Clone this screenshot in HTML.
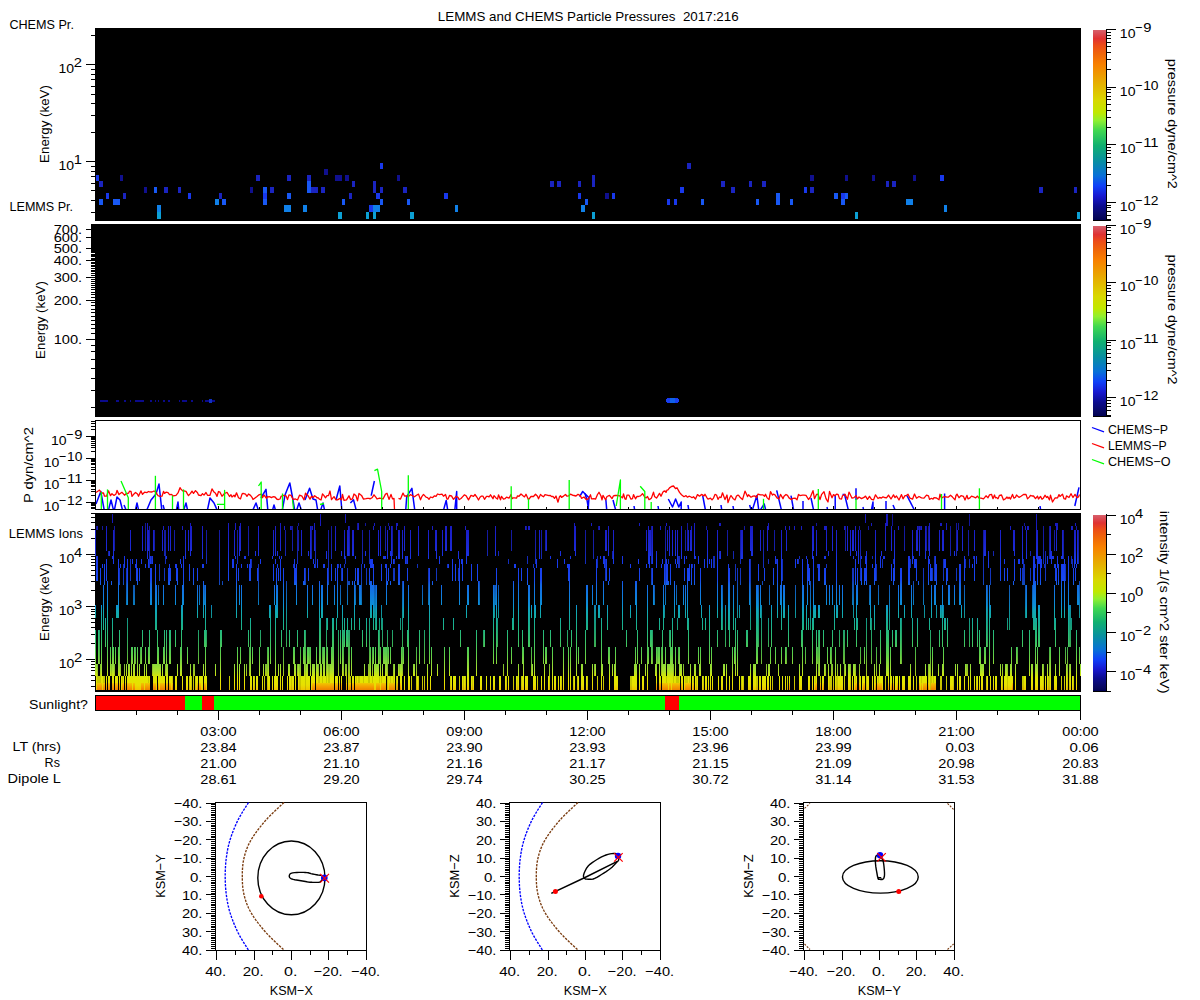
<!DOCTYPE html>
<html><head><meta charset="utf-8"><style>
html,body{margin:0;padding:0;background:#fff;width:1200px;height:1000px;overflow:hidden}
svg{display:block}
text{font-family:"Liberation Sans",sans-serif;fill:#000}
</style></head><body>
<svg width="1200" height="1000" viewBox="0 0 1200 1000" shape-rendering="crispEdges">
<defs><linearGradient id="cmap" x1="0" y1="1" x2="0" y2="0"><stop offset="0.0" stop-color="#000050"/><stop offset="0.026" stop-color="#080860"/><stop offset="0.079" stop-color="#0c0c90"/><stop offset="0.13" stop-color="#1818d0"/><stop offset="0.184" stop-color="#1040f8"/><stop offset="0.237" stop-color="#0870d8"/><stop offset="0.316" stop-color="#0890a0"/><stop offset="0.395" stop-color="#10b070"/><stop offset="0.474" stop-color="#40d850"/><stop offset="0.526" stop-color="#90f030"/><stop offset="0.568" stop-color="#c0e800"/><stop offset="0.632" stop-color="#d8d800"/><stop offset="0.737" stop-color="#e8a800"/><stop offset="0.82" stop-color="#f88000"/><stop offset="0.87" stop-color="#f06808"/><stop offset="0.92" stop-color="#ec4c18"/><stop offset="0.955" stop-color="#e03232"/><stop offset="0.985" stop-color="#d8505a"/><stop offset="1.0" stop-color="#d8606a"/></linearGradient><linearGradient id="iong" gradientUnits="userSpaceOnUse" x1="0" y1="513" x2="0" y2="691"><stop offset="0.0000" stop-color="#1414b0"/><stop offset="0.0955" stop-color="#1a1ec8"/><stop offset="0.2079" stop-color="#1c2ad8"/><stop offset="0.2640" stop-color="#1838ec"/><stop offset="0.3764" stop-color="#1848f0"/><stop offset="0.4045" stop-color="#1468e8"/><stop offset="0.5169" stop-color="#0c90d8"/><stop offset="0.5506" stop-color="#10a8b8"/><stop offset="0.6236" stop-color="#18b090"/><stop offset="0.7022" stop-color="#30c070"/><stop offset="0.7978" stop-color="#60d048"/><stop offset="0.8820" stop-color="#a8e030"/><stop offset="0.9270" stop-color="#e0e800"/><stop offset="0.9663" stop-color="#e8e000"/><stop offset="0.9944" stop-color="#f0c400"/></linearGradient><linearGradient id="ionh" gradientUnits="userSpaceOnUse" x1="0" y1="683" x2="0" y2="690"><stop offset="0" stop-color="#f0c800"/><stop offset="0.5" stop-color="#f4a000"/><stop offset="1" stop-color="#f08000"/></linearGradient><linearGradient id="iongd" gradientUnits="userSpaceOnUse" x1="0" y1="513" x2="0" y2="691"><stop offset="0.0000" stop-color="#10108c"/><stop offset="0.0955" stop-color="#1418a0"/><stop offset="0.2079" stop-color="#1621ac"/><stop offset="0.2640" stop-color="#132cbc"/><stop offset="0.3764" stop-color="#1339c0"/><stop offset="0.4045" stop-color="#1053b9"/><stop offset="0.5169" stop-color="#0a7ebe"/><stop offset="0.5506" stop-color="#0e93a1"/><stop offset="0.6236" stop-color="#159a7e"/><stop offset="0.7022" stop-color="#2aa862"/><stop offset="0.7978" stop-color="#54b73f"/><stop offset="0.8820" stop-color="#93c52a"/><stop offset="0.9270" stop-color="#c5cc00"/><stop offset="0.9663" stop-color="#ccc500"/><stop offset="0.9944" stop-color="#d3ac00"/></linearGradient></defs>
<rect width="1200" height="1000" fill="#fff"/>
<text x="437.85" y="20.5" font-size="13.5" textLength="300.8" lengthAdjust="spacingAndGlyphs" xml:space="preserve">LEMMS and CHEMS Particle Pressures  2017:216</text><rect x="95" y="28" width="986" height="193" fill="#000"/><rect x="96" y="175" width="3" height="6" fill="#1838ec"/><rect x="99" y="181" width="4" height="6" fill="#1a24c0"/><rect x="120" y="175" width="3" height="6" fill="#10108e"/><rect x="106" y="193" width="3" height="6" fill="#1838ec"/><rect x="99" y="199" width="4" height="6" fill="#1858f4"/><rect x="113" y="199" width="7" height="6" fill="#1858f4"/><rect x="123" y="193" width="3" height="6" fill="#1a24c0"/><rect x="144" y="187" width="3" height="6" fill="#10108e"/><rect x="154" y="187" width="3" height="6" fill="#1858f4"/><rect x="164" y="187" width="4" height="6" fill="#1a24c0"/><rect x="178" y="187" width="3" height="6" fill="#1a24c0"/><rect x="188" y="193" width="3" height="6" fill="#1838ec"/><rect x="157" y="205" width="4" height="7" fill="#1080e8"/><rect x="157" y="212" width="4" height="7" fill="#0ca0d4"/><rect x="215" y="199" width="4" height="6" fill="#1080e8"/><rect x="219" y="193" width="3" height="6" fill="#1a24c0"/><rect x="222" y="199" width="4" height="6" fill="#1858f4"/><rect x="250" y="187" width="3" height="6" fill="#10108e"/><rect x="256" y="175" width="4" height="6" fill="#1a24c0"/><rect x="263" y="187" width="4" height="6" fill="#1858f4"/><rect x="263" y="193" width="4" height="6" fill="#1838ec"/><rect x="263" y="199" width="4" height="6" fill="#1858f4"/><rect x="270" y="187" width="4" height="6" fill="#1a24c0"/><rect x="287" y="175" width="4" height="6" fill="#1a24c0"/><rect x="287" y="193" width="4" height="6" fill="#1858f4"/><rect x="284" y="205" width="7" height="7" fill="#1080e8"/><rect x="307" y="175" width="4" height="6" fill="#1a24c0"/><rect x="307" y="181" width="4" height="6" fill="#1858f4"/><rect x="307" y="187" width="4" height="6" fill="#1858f4"/><rect x="311" y="187" width="7" height="6" fill="#1a24c0"/><rect x="321" y="187" width="4" height="6" fill="#1a24c0"/><rect x="324" y="169" width="4" height="6" fill="#10108e"/><rect x="335" y="175" width="7" height="6" fill="#10108e"/><rect x="303" y="205" width="4" height="7" fill="#1080e8"/><rect x="342" y="199" width="3" height="6" fill="#1858f4"/><rect x="338" y="212" width="4" height="7" fill="#0ca0d4"/><rect x="345" y="175" width="4" height="6" fill="#10108e"/><rect x="352" y="181" width="3" height="6" fill="#1a24c0"/><rect x="349" y="193" width="3" height="6" fill="#1a24c0"/><rect x="373" y="181" width="3" height="6" fill="#1a24c0"/><rect x="373" y="187" width="3" height="6" fill="#1a24c0"/><rect x="380" y="163" width="3" height="6" fill="#1838ec"/><rect x="380" y="187" width="3" height="6" fill="#1a24c0"/><rect x="376" y="193" width="4" height="6" fill="#1838ec"/><rect x="380" y="199" width="3" height="6" fill="#1858f4"/><rect x="369" y="205" width="4" height="7" fill="#1838ec"/><rect x="373" y="205" width="7" height="7" fill="#1080e8"/><rect x="366" y="212" width="3" height="7" fill="#0ca0d4"/><rect x="373" y="212" width="3" height="7" fill="#0ca0d4"/><rect x="397" y="175" width="3" height="6" fill="#10108e"/><rect x="403" y="187" width="4" height="6" fill="#1a24c0"/><rect x="407" y="199" width="3" height="6" fill="#1858f4"/><rect x="410" y="212" width="4" height="7" fill="#0ca0d4"/><rect x="444" y="193" width="4" height="6" fill="#1838ec"/><rect x="455" y="205" width="3" height="7" fill="#1080e8"/><rect x="550" y="181" width="4" height="6" fill="#1a24c0"/><rect x="557" y="181" width="4" height="6" fill="#1a24c0"/><rect x="578" y="181" width="3" height="6" fill="#1a24c0"/><rect x="578" y="193" width="3" height="6" fill="#1838ec"/><rect x="585" y="199" width="3" height="6" fill="#1858f4"/><rect x="581" y="205" width="4" height="7" fill="#1080e8"/><rect x="592" y="175" width="3" height="6" fill="#1a24c0"/><rect x="592" y="181" width="3" height="6" fill="#1a24c0"/><rect x="592" y="212" width="3" height="7" fill="#0ca0d4"/><rect x="605" y="193" width="4" height="6" fill="#10108e"/><rect x="612" y="193" width="3" height="6" fill="#1838ec"/><rect x="667" y="199" width="3" height="6" fill="#1838ec"/><rect x="674" y="199" width="3" height="6" fill="#1838ec"/><rect x="680" y="187" width="4" height="6" fill="#1838ec"/><rect x="687" y="163" width="4" height="6" fill="#1a24c0"/><rect x="701" y="199" width="3" height="6" fill="#1858f4"/><rect x="721" y="181" width="4" height="6" fill="#1a24c0"/><rect x="731" y="187" width="4" height="6" fill="#1a24c0"/><rect x="749" y="181" width="3" height="6" fill="#1a24c0"/><rect x="762" y="181" width="4" height="6" fill="#1a24c0"/><rect x="756" y="199" width="3" height="6" fill="#1858f4"/><rect x="776" y="193" width="4" height="6" fill="#1858f4"/><rect x="776" y="199" width="4" height="6" fill="#1858f4"/><rect x="790" y="199" width="3" height="6" fill="#1858f4"/><rect x="804" y="187" width="3" height="6" fill="#1838ec"/><rect x="810" y="175" width="4" height="6" fill="#10108e"/><rect x="810" y="187" width="4" height="6" fill="#1a24c0"/><rect x="834" y="193" width="4" height="6" fill="#1858f4"/><rect x="841" y="193" width="4" height="6" fill="#1838ec"/><rect x="841" y="199" width="4" height="6" fill="#1858f4"/><rect x="845" y="193" width="3" height="6" fill="#1858f4"/><rect x="845" y="175" width="3" height="6" fill="#10108e"/><rect x="872" y="175" width="3" height="6" fill="#10108e"/><rect x="886" y="181" width="3" height="6" fill="#1a24c0"/><rect x="892" y="181" width="4" height="6" fill="#1a24c0"/><rect x="913" y="175" width="3" height="6" fill="#10108e"/><rect x="940" y="175" width="4" height="6" fill="#1838ec"/><rect x="906" y="199" width="7" height="6" fill="#1080e8"/><rect x="944" y="205" width="3" height="7" fill="#1080e8"/><rect x="855" y="212" width="3" height="7" fill="#0ca0d4"/><rect x="1039" y="187" width="4" height="6" fill="#1a24c0"/><rect x="1074" y="187" width="3" height="6" fill="#1a24c0"/><rect x="1077" y="212" width="3" height="7" fill="#0ca0d4"/><rect x="91" y="212" width="4" height="1" fill="#000"/><rect x="91" y="200" width="4" height="1" fill="#000"/><rect x="91" y="190" width="4" height="1" fill="#000"/><rect x="91" y="183" width="4" height="1" fill="#000"/><rect x="91" y="176" width="4" height="1" fill="#000"/><rect x="91" y="171" width="4" height="1" fill="#000"/><rect x="91" y="166" width="4" height="1" fill="#000"/><rect x="86" y="161" width="9" height="1" fill="#000"/><rect x="91" y="132" width="4" height="1" fill="#000"/><rect x="91" y="115" width="4" height="1" fill="#000"/><rect x="91" y="103" width="4" height="1" fill="#000"/><rect x="91" y="94" width="4" height="1" fill="#000"/><rect x="91" y="86" width="4" height="1" fill="#000"/><rect x="91" y="79" width="4" height="1" fill="#000"/><rect x="91" y="74" width="4" height="1" fill="#000"/><rect x="91" y="69" width="4" height="1" fill="#000"/><rect x="86" y="64" width="9" height="1" fill="#000"/><rect x="91" y="35" width="4" height="1" fill="#000"/><text x="9.4" y="29" font-size="13.5" textLength="64.5" lengthAdjust="spacingAndGlyphs" xml:space="preserve">CHEMS Pr.</text><text x="9.5" y="211.2" font-size="13.5" textLength="63.6" lengthAdjust="spacingAndGlyphs" xml:space="preserve">LEMMS Pr.</text><text x="58.4" y="73.25" font-size="13.5" textLength="15.6" lengthAdjust="spacingAndGlyphs" xml:space="preserve">10</text><text x="73.7" y="67.35" font-size="13.5" textLength="8.2" lengthAdjust="spacingAndGlyphs" xml:space="preserve">2</text><text x="58.4" y="170.1" font-size="13.5" textLength="15.6" lengthAdjust="spacingAndGlyphs" xml:space="preserve">10</text><text x="73.7" y="164.2" font-size="13.5" textLength="8.2" lengthAdjust="spacingAndGlyphs" xml:space="preserve">1</text><text transform="translate(49.2,162.9) rotate(-90)" x="0" y="0" font-size="13.5" textLength="77.8" lengthAdjust="spacingAndGlyphs" xml:space="preserve">Energy (keV)</text><rect x="95" y="224" width="986" height="193" fill="#000"/><rect x="100" y="400" width="8" height="2" fill="#0a0a8c"/><rect x="116" y="400" width="3" height="2" fill="#0a0a8c"/><rect x="124" y="400" width="2" height="2" fill="#0a0a8c"/><rect x="130" y="400" width="1" height="2" fill="#0a0a8c"/><rect x="135" y="400" width="9" height="2" fill="#0a0a8c"/><rect x="150" y="400" width="2" height="2" fill="#0a0a8c"/><rect x="155" y="400" width="1" height="2" fill="#0a0a8c"/><rect x="158" y="400" width="1" height="2" fill="#0a0a8c"/><rect x="163" y="400" width="2" height="2" fill="#0a0a8c"/><rect x="168" y="400" width="2" height="2" fill="#0a0a8c"/><rect x="179" y="400" width="1" height="2" fill="#0a0a8c"/><rect x="182" y="400" width="5" height="2" fill="#0a0a8c"/><rect x="191" y="400" width="2" height="2" fill="#0a0a8c"/><rect x="202" y="400" width="1" height="2" fill="#0a0a8c"/><rect x="205" y="400" width="10" height="2" fill="#0a0a8c"/><rect x="209" y="399" width="3" height="4" fill="#1030c0"/><rect x="667" y="398" width="11" height="5" fill="#1838f0"/><rect x="666" y="399" width="13" height="3" fill="#1840f0"/><rect x="670" y="398" width="5" height="5" fill="#1060e8"/><rect x="91" y="407" width="4" height="1" fill="#000"/><rect x="91" y="390" width="4" height="1" fill="#000"/><rect x="91" y="378" width="4" height="1" fill="#000"/><rect x="91" y="368" width="4" height="1" fill="#000"/><rect x="91" y="359" width="4" height="1" fill="#000"/><rect x="91" y="351" width="4" height="1" fill="#000"/><rect x="91" y="345" width="4" height="1" fill="#000"/><rect x="86" y="339" width="9" height="1" fill="#000"/><rect x="91" y="333" width="4" height="1" fill="#000"/><rect x="91" y="328" width="4" height="1" fill="#000"/><rect x="91" y="324" width="4" height="1" fill="#000"/><rect x="91" y="320" width="4" height="1" fill="#000"/><rect x="91" y="316" width="4" height="1" fill="#000"/><rect x="91" y="312" width="4" height="1" fill="#000"/><rect x="91" y="309" width="4" height="1" fill="#000"/><rect x="91" y="305" width="4" height="1" fill="#000"/><rect x="91" y="302" width="4" height="1" fill="#000"/><rect x="86" y="300" width="9" height="1" fill="#000"/><rect x="91" y="297" width="4" height="1" fill="#000"/><rect x="91" y="294" width="4" height="1" fill="#000"/><rect x="91" y="292" width="4" height="1" fill="#000"/><rect x="91" y="289" width="4" height="1" fill="#000"/><rect x="91" y="287" width="4" height="1" fill="#000"/><rect x="91" y="285" width="4" height="1" fill="#000"/><rect x="91" y="283" width="4" height="1" fill="#000"/><rect x="91" y="281" width="4" height="1" fill="#000"/><rect x="91" y="279" width="4" height="1" fill="#000"/><rect x="86" y="277" width="9" height="1" fill="#000"/><rect x="91" y="275" width="4" height="1" fill="#000"/><rect x="91" y="273" width="4" height="1" fill="#000"/><rect x="91" y="271" width="4" height="1" fill="#000"/><rect x="91" y="270" width="4" height="1" fill="#000"/><rect x="91" y="268" width="4" height="1" fill="#000"/><rect x="91" y="266" width="4" height="1" fill="#000"/><rect x="91" y="265" width="4" height="1" fill="#000"/><rect x="91" y="263" width="4" height="1" fill="#000"/><rect x="91" y="262" width="4" height="1" fill="#000"/><rect x="86" y="260" width="9" height="1" fill="#000"/><rect x="91" y="259" width="4" height="1" fill="#000"/><rect x="91" y="258" width="4" height="1" fill="#000"/><rect x="91" y="256" width="4" height="1" fill="#000"/><rect x="91" y="255" width="4" height="1" fill="#000"/><rect x="91" y="254" width="4" height="1" fill="#000"/><rect x="91" y="252" width="4" height="1" fill="#000"/><rect x="91" y="251" width="4" height="1" fill="#000"/><rect x="91" y="250" width="4" height="1" fill="#000"/><rect x="91" y="249" width="4" height="1" fill="#000"/><rect x="86" y="248" width="9" height="1" fill="#000"/><rect x="91" y="247" width="4" height="1" fill="#000"/><rect x="91" y="246" width="4" height="1" fill="#000"/><rect x="91" y="244" width="4" height="1" fill="#000"/><rect x="91" y="243" width="4" height="1" fill="#000"/><rect x="91" y="242" width="4" height="1" fill="#000"/><rect x="91" y="241" width="4" height="1" fill="#000"/><rect x="91" y="240" width="4" height="1" fill="#000"/><rect x="91" y="239" width="4" height="1" fill="#000"/><rect x="91" y="238" width="4" height="1" fill="#000"/><rect x="86" y="237" width="9" height="1" fill="#000"/><rect x="91" y="237" width="4" height="1" fill="#000"/><rect x="91" y="236" width="4" height="1" fill="#000"/><rect x="91" y="235" width="4" height="1" fill="#000"/><rect x="91" y="234" width="4" height="1" fill="#000"/><rect x="91" y="233" width="4" height="1" fill="#000"/><rect x="91" y="232" width="4" height="1" fill="#000"/><rect x="91" y="231" width="4" height="1" fill="#000"/><rect x="91" y="230" width="4" height="1" fill="#000"/><rect x="91" y="230" width="4" height="1" fill="#000"/><rect x="86" y="229" width="9" height="1" fill="#000"/><rect x="91" y="228" width="4" height="1" fill="#000"/><rect x="91" y="227" width="4" height="1" fill="#000"/><rect x="91" y="226" width="4" height="1" fill="#000"/><rect x="91" y="226" width="4" height="1" fill="#000"/><rect x="91" y="225" width="4" height="1" fill="#000"/><rect x="91" y="224" width="4" height="1" fill="#000"/><rect x="91" y="225" width="4" height="26" fill="#000"/><text x="82.2" y="344.2" font-size="13.5" text-anchor="end" textLength="28.5" lengthAdjust="spacingAndGlyphs" xml:space="preserve">100.</text><text x="82.2" y="305.2" font-size="13.5" text-anchor="end" textLength="28.5" lengthAdjust="spacingAndGlyphs" xml:space="preserve">200.</text><text x="82.2" y="282.2" font-size="13.5" text-anchor="end" textLength="28.5" lengthAdjust="spacingAndGlyphs" xml:space="preserve">300.</text><text x="82.2" y="265.2" font-size="13.5" text-anchor="end" textLength="28.5" lengthAdjust="spacingAndGlyphs" xml:space="preserve">400.</text><text x="82.2" y="253.2" font-size="13.5" text-anchor="end" textLength="28.5" lengthAdjust="spacingAndGlyphs" xml:space="preserve">500.</text><text x="82.2" y="242.2" font-size="13.5" text-anchor="end" textLength="28.5" lengthAdjust="spacingAndGlyphs" xml:space="preserve">600.</text><text x="82.2" y="234.2" font-size="13.5" text-anchor="end" textLength="28.5" lengthAdjust="spacingAndGlyphs" xml:space="preserve">700.</text><text transform="translate(45.2,358.9) rotate(-90)" x="0" y="0" font-size="13.5" textLength="77.8" lengthAdjust="spacingAndGlyphs" xml:space="preserve">Energy (keV)</text><clipPath id="p3c"><rect x="96" y="421" width="984" height="88"/></clipPath><g clip-path="url(#p3c)"><polyline points="96.0,504.0 100.8,491.5 104.0,509.0 106.0,512.0" fill="none" stroke="#0000ff" stroke-width="1.5" stroke-linejoin="round" shape-rendering="auto"/><polyline points="108.0,512.0 111.0,500.0 114.0,512.0 117.0,497.0 120.0,500.0 123.0,512.0" fill="none" stroke="#0000ff" stroke-width="1.5" stroke-linejoin="round" shape-rendering="auto"/><polyline points="124.0,505.0 127.0,512.0" fill="none" stroke="#0000ff" stroke-width="1.5" stroke-linejoin="round" shape-rendering="auto"/><polyline points="135.0,512.0 137.0,503.0 139.0,512.0" fill="none" stroke="#0000ff" stroke-width="1.5" stroke-linejoin="round" shape-rendering="auto"/><polyline points="146.0,512.0 151.0,500.0 156.0,494.0 159.0,484.0 162.0,512.0" fill="none" stroke="#0000ff" stroke-width="1.5" stroke-linejoin="round" shape-rendering="auto"/><polyline points="163.0,505.0 165.0,512.0" fill="none" stroke="#0000ff" stroke-width="1.5" stroke-linejoin="round" shape-rendering="auto"/><polyline points="176.0,512.0 178.0,502.0 179.0,512.0" fill="none" stroke="#0000ff" stroke-width="1.5" stroke-linejoin="round" shape-rendering="auto"/><polyline points="183.0,512.0 186.0,503.0 188.0,512.0" fill="none" stroke="#0000ff" stroke-width="1.5" stroke-linejoin="round" shape-rendering="auto"/><polyline points="207.0,512.0 210.0,498.0 214.0,503.0 218.0,512.0" fill="none" stroke="#0000ff" stroke-width="1.5" stroke-linejoin="round" shape-rendering="auto"/><polyline points="252.0,512.0 256.0,503.0 259.0,512.0" fill="none" stroke="#0000ff" stroke-width="1.5" stroke-linejoin="round" shape-rendering="auto"/><polyline points="261.0,498.0 266.0,489.4 268.0,512.0" fill="none" stroke="#0000ff" stroke-width="1.5" stroke-linejoin="round" shape-rendering="auto"/><polyline points="272.0,512.0 274.0,505.0 276.0,512.0" fill="none" stroke="#0000ff" stroke-width="1.5" stroke-linejoin="round" shape-rendering="auto"/><polyline points="282.0,512.0 285.0,495.0 289.8,483.0 293.0,500.0 295.0,512.0" fill="none" stroke="#0000ff" stroke-width="1.5" stroke-linejoin="round" shape-rendering="auto"/><polyline points="296.0,512.0 299.0,503.0 302.0,512.0" fill="none" stroke="#0000ff" stroke-width="1.5" stroke-linejoin="round" shape-rendering="auto"/><polyline points="305.0,500.0 309.6,488.3 313.0,499.0 316.0,500.0 318.0,512.0" fill="none" stroke="#0000ff" stroke-width="1.5" stroke-linejoin="round" shape-rendering="auto"/><polyline points="320.0,512.0 323.0,503.0 325.0,512.0" fill="none" stroke="#0000ff" stroke-width="1.5" stroke-linejoin="round" shape-rendering="auto"/><polyline points="336.0,500.0 339.8,486.0 342.0,512.0" fill="none" stroke="#0000ff" stroke-width="1.5" stroke-linejoin="round" shape-rendering="auto"/><polyline points="350.4,503.0 353.5,499.8 356.7,512.0" fill="none" stroke="#0000ff" stroke-width="1.5" stroke-linejoin="round" shape-rendering="auto"/><polyline points="371.2,495.6 374.4,481.0" fill="none" stroke="#0000ff" stroke-width="1.5" stroke-linejoin="round" shape-rendering="auto"/><polyline points="405.6,512.0 406.7,496.7 411.9,488.3 415.0,512.0" fill="none" stroke="#0000ff" stroke-width="1.5" stroke-linejoin="round" shape-rendering="auto"/><polyline points="443.0,512.0 446.2,500.4 448.0,512.0" fill="none" stroke="#0000ff" stroke-width="1.5" stroke-linejoin="round" shape-rendering="auto"/><polyline points="454.6,512.0 456.7,491.5 456.7,512.0" fill="none" stroke="#0000ff" stroke-width="1.5" stroke-linejoin="round" shape-rendering="auto"/><polyline points="579.6,496.7 582.7,491.5 589.0,497.7 588.0,512.0" fill="none" stroke="#0000ff" stroke-width="1.5" stroke-linejoin="round" shape-rendering="auto"/><polyline points="585.0,493.5 587.0,500.0 589.0,512.0" fill="none" stroke="#0000ff" stroke-width="1.5" stroke-linejoin="round" shape-rendering="auto"/><polyline points="605.8,499.0 606.9,512.0" fill="none" stroke="#0000ff" stroke-width="1.5" stroke-linejoin="round" shape-rendering="auto"/><polyline points="613.0,500.0 616.2,512.0" fill="none" stroke="#0000ff" stroke-width="1.5" stroke-linejoin="round" shape-rendering="auto"/><polyline points="634.0,506.0 635.0,512.0" fill="none" stroke="#0000ff" stroke-width="1.5" stroke-linejoin="round" shape-rendering="auto"/><polyline points="658.0,506.0 659.0,512.0" fill="none" stroke="#0000ff" stroke-width="1.5" stroke-linejoin="round" shape-rendering="auto"/><polyline points="668.3,499.0 672.5,507.0 675.6,499.0 678.8,507.0 681.2,502.0 681.2,512.0" fill="none" stroke="#0000ff" stroke-width="1.5" stroke-linejoin="round" shape-rendering="auto"/><polyline points="688.0,505.0 689.0,512.0" fill="none" stroke="#0000ff" stroke-width="1.5" stroke-linejoin="round" shape-rendering="auto"/><polyline points="702.7,495.6 705.8,512.0" fill="none" stroke="#0000ff" stroke-width="1.5" stroke-linejoin="round" shape-rendering="auto"/><polyline points="721.0,505.0 722.0,512.0" fill="none" stroke="#0000ff" stroke-width="1.5" stroke-linejoin="round" shape-rendering="auto"/><polyline points="733.0,506.0 734.0,512.0" fill="none" stroke="#0000ff" stroke-width="1.5" stroke-linejoin="round" shape-rendering="auto"/><polyline points="749.6,505.0 751.7,512.0 756.9,495.6 759.0,512.0 764.2,504.0 766.2,512.0" fill="none" stroke="#0000ff" stroke-width="1.5" stroke-linejoin="round" shape-rendering="auto"/><polyline points="776.7,490.4 781.9,512.0" fill="none" stroke="#0000ff" stroke-width="1.5" stroke-linejoin="round" shape-rendering="auto"/><polyline points="791.0,495.6 794.0,512.0" fill="none" stroke="#0000ff" stroke-width="1.5" stroke-linejoin="round" shape-rendering="auto"/><polyline points="803.0,501.0 803.0,512.0" fill="none" stroke="#0000ff" stroke-width="1.5" stroke-linejoin="round" shape-rendering="auto"/><polyline points="811.0,498.0 814.0,512.0" fill="none" stroke="#0000ff" stroke-width="1.5" stroke-linejoin="round" shape-rendering="auto"/><polyline points="827.0,507.0 828.0,512.0" fill="none" stroke="#0000ff" stroke-width="1.5" stroke-linejoin="round" shape-rendering="auto"/><polyline points="835.2,495.6 835.2,512.0" fill="none" stroke="#0000ff" stroke-width="1.5" stroke-linejoin="round" shape-rendering="auto"/><polyline points="842.5,494.5 844.6,494.5 848.8,512.0" fill="none" stroke="#0000ff" stroke-width="1.5" stroke-linejoin="round" shape-rendering="auto"/><polyline points="856.0,488.3 856.0,500.0" fill="none" stroke="#0000ff" stroke-width="1.5" stroke-linejoin="round" shape-rendering="auto"/><polyline points="863.0,507.0 864.0,512.0" fill="none" stroke="#0000ff" stroke-width="1.5" stroke-linejoin="round" shape-rendering="auto"/><polyline points="871.0,512.0 873.0,502.0 873.0,512.0" fill="none" stroke="#0000ff" stroke-width="1.5" stroke-linejoin="round" shape-rendering="auto"/><polyline points="886.0,501.0 886.0,512.0" fill="none" stroke="#0000ff" stroke-width="1.5" stroke-linejoin="round" shape-rendering="auto"/><polyline points="893.0,505.0 896.0,512.0" fill="none" stroke="#0000ff" stroke-width="1.5" stroke-linejoin="round" shape-rendering="auto"/><polyline points="907.0,495.6 915.4,512.0" fill="none" stroke="#0000ff" stroke-width="1.5" stroke-linejoin="round" shape-rendering="auto"/><polyline points="944.6,493.5 944.6,512.0" fill="none" stroke="#0000ff" stroke-width="1.5" stroke-linejoin="round" shape-rendering="auto"/><polyline points="1040.0,506.0 1041.0,512.0" fill="none" stroke="#0000ff" stroke-width="1.5" stroke-linejoin="round" shape-rendering="auto"/><polyline points="1074.8,506.0 1079.0,487.3" fill="none" stroke="#0000ff" stroke-width="1.5" stroke-linejoin="round" shape-rendering="auto"/><polyline points="96.0,492.4 98.5,490.8 99.5,490.1 101.5,493.0 103.5,493.0 104.5,496.2 106.5,496.2 108.5,490.8 110.5,495.7 112.0,493.7 114.0,495.4 116.0,493.9 117.0,490.4 119.0,494.6 120.5,493.3 122.0,492.3 124.5,495.2 126.0,493.7 128.5,493.2 129.5,491.2 131.0,491.4 132.0,496.3 134.0,493.9 135.5,492.5 137.5,494.0 138.5,496.2 141.0,490.9 142.5,494.4 144.5,492.2 147.0,492.6 148.5,491.5 149.5,491.8 152.0,492.0 154.0,491.0 156.0,492.2 158.0,495.7 160.0,496.4 162.0,496.2 163.5,491.4 164.5,493.4 166.0,492.2 168.0,492.7 169.5,494.6 171.5,494.4 173.5,495.9 176.0,495.3 178.0,492.9 180.0,487.7 181.0,489.2 183.0,491.1 184.0,490.9 186.0,491.4 187.5,494.1 188.5,495.6 190.5,493.4 192.0,491.1 193.5,493.4 195.5,490.6 197.5,492.7 198.5,495.0 201.0,495.7 202.5,493.6 204.0,495.1 206.0,492.5 207.5,495.3 210.0,495.3 212.0,488.9 214.0,492.1 215.5,493.2 217.0,496.4 218.5,491.5 220.0,492.2 222.0,496.2 224.5,493.5 227.0,492.4 229.5,496.5 231.0,494.7 232.0,497.0 234.0,495.2 235.0,496.8 236.5,492.8 238.5,497.7 240.5,498.9 242.0,494.1 243.0,493.4 245.5,494.2 247.0,496.3 248.5,494.0 250.5,495.4 252.0,497.3 253.0,499.5 255.0,498.0 257.0,496.5 259.0,494.8 261.0,494.1 262.5,497.7 264.0,495.0 266.5,498.4 267.5,496.4 268.5,497.0 269.5,496.7 271.5,497.6 273.0,496.7 275.0,497.0 277.0,499.3 278.5,499.5 280.0,499.0 281.0,496.4 283.5,495.4 286.0,495.8 287.5,499.6 289.0,494.9 291.0,495.3 293.0,499.3 295.5,499.0 297.5,500.0 299.5,495.2 302.0,496.2 304.0,499.9 305.5,493.1 306.5,494.5 308.0,495.6 310.0,499.1 311.5,496.4 313.5,497.4 314.5,495.7 316.0,496.6 317.0,497.8 318.0,497.6 319.5,499.2 321.0,500.0 322.5,493.8 324.0,495.6 325.5,497.8 327.0,495.7 328.5,495.6 330.0,491.0 331.5,499.6 334.0,496.6 336.0,499.8 337.5,499.9 340.0,498.4 341.5,499.9 342.5,494.4 344.0,500.4 346.5,499.8 349.0,495.8 350.5,499.6 352.5,498.8 354.0,494.0 356.0,495.7 357.5,500.8 359.0,493.4 361.5,495.4 363.5,499.1 366.0,498.7 367.5,498.3 369.0,498.3 370.0,498.9 372.0,497.8 374.0,494.8 376.0,497.4 377.0,499.0 379.5,498.1 381.0,498.4 383.0,499.0 385.5,494.1 387.0,493.3 389.0,499.4 391.0,494.4 392.5,498.9 394.0,498.4 394.6,512.0" fill="none" stroke="#ff0000" stroke-width="1.3" stroke-linejoin="round" shape-rendering="auto"/><polyline points="398.5,498.4 400.5,499.1 403.0,493.1 404.5,496.0 407.0,495.8 408.0,496.9 410.5,494.6 412.5,495.7 414.5,496.8 416.5,495.2 418.5,494.1 420.5,499.8 422.0,496.3 423.5,494.4 426.0,497.1 427.5,497.6 429.0,499.3 430.5,497.0 432.5,497.7 434.5,495.8 436.0,496.3 437.5,494.0 439.5,494.7 442.0,494.1 443.5,496.2 445.5,494.5 447.0,499.1 448.0,499.0 449.5,495.5 451.5,495.9 453.5,499.3 456.0,496.4 458.0,497.3 459.0,499.6 461.0,498.5 462.5,496.9 464.5,494.8 466.0,495.7 468.5,499.9 471.0,495.4 473.5,496.4 475.0,494.5 477.0,497.3 478.5,500.0 480.0,497.3 481.5,496.1 483.0,496.2 484.5,499.3 486.5,496.3 488.0,496.3 489.0,497.0 490.5,494.8 493.0,498.7 494.0,495.6 496.0,497.9 497.5,499.1 498.5,494.8 500.5,499.8 501.5,496.3 503.5,499.1 505.0,498.7 506.5,497.1 509.0,498.2 511.0,494.5 512.0,498.7 513.0,497.9 514.5,497.8 516.5,498.2 517.5,495.8 519.0,496.3 521.0,494.0 523.0,495.7 524.5,496.9 526.0,494.2 528.5,499.7 531.0,496.5 533.5,496.5 535.5,494.2 537.5,496.2 538.5,498.8 540.5,494.4 542.0,495.9 543.5,496.8 545.0,494.7 547.0,495.1 549.0,495.6 550.0,495.3 551.5,496.5 553.0,496.4 554.5,498.4 556.0,496.0 558.0,502.2 559.5,496.7 560.5,495.7 561.5,497.4 563.5,496.1 565.5,494.5 567.0,496.2 568.5,495.9 570.5,494.2 573.0,495.4 574.0,495.5 576.0,496.0 578.0,494.3 580.5,495.9 581.5,498.3 584.0,497.0 586.5,499.7 588.5,498.7 590.5,494.8 591.5,498.8 594.0,498.6 595.5,499.2 597.5,494.5 599.0,492.3 601.0,496.0 602.0,499.9 603.0,495.3 605.5,499.8 607.0,496.5 609.5,495.4 612.0,498.6 613.5,495.8 615.0,495.5 617.0,495.5 618.5,495.7 620.0,496.0 621.5,497.0 622.5,497.9 623.5,494.0 625.0,499.0 626.0,499.3 627.0,495.1 629.0,495.2 631.0,499.2 632.5,498.6 633.5,494.6 635.5,498.8 637.0,496.3 638.5,496.5 640.5,495.9 642.5,493.6 645.0,497.3 646.0,497.9 647.5,496.5 649.0,499.6 650.0,499.2 651.5,497.9 653.5,492.1 654.5,496.4 656.5,498.1 657.5,496.6 659.5,493.4 661.0,496.2 662.5,492.9 663.5,491.4 665.0,491.0 666.0,492.4 667.0,490.1 668.0,489.9 669.5,487.9 671.5,486.5 673.5,486.0 675.5,488.6 677.0,487.8 679.5,492.4 681.5,494.7 684.0,496.7 686.0,495.6 687.5,497.2 689.0,496.2 691.0,497.0 692.0,497.7 693.5,496.7 695.5,499.0 697.5,494.6 699.5,496.2 701.5,494.4 704.0,495.9 705.0,494.3 707.0,497.9 708.0,499.1 710.5,498.2 712.0,499.9 713.5,498.1 715.0,494.4 716.5,495.0 718.0,499.4 719.5,497.0 721.0,497.6 722.5,492.8 725.0,499.6 727.0,495.0 728.0,502.6 730.0,497.3 731.0,495.5 733.0,498.4 735.0,499.9 736.5,496.0 738.0,495.1 739.0,495.8 740.5,497.8 742.5,499.6 745.0,491.1 747.5,496.6 748.5,494.8 751.0,497.2 753.0,496.1 755.0,495.8 756.5,497.7 758.0,494.1 760.5,494.9 763.0,494.9 764.5,496.4 765.5,494.3 767.0,497.6 769.0,499.6 770.5,491.7 772.5,495.1 773.5,494.1 775.0,494.9 777.0,497.9 779.0,498.9 780.5,494.4 783.0,498.7 784.0,496.3 786.0,494.5 787.5,495.4 789.0,497.9 791.5,499.6 793.0,498.3 795.0,498.1 797.0,499.8 798.5,494.5 800.0,495.6 802.5,495.2 804.0,495.2 806.0,495.4 808.5,499.5 810.5,496.8 813.0,490.7 814.5,498.7 816.5,494.5 818.0,494.2 820.0,499.6 821.5,494.7 824.0,491.7 826.0,498.6 828.0,502.0 829.5,491.5 832.0,497.8 833.5,494.6 835.0,495.8 836.5,494.1 838.0,494.3 839.5,498.6 841.5,499.1 842.5,495.7 845.0,494.3 847.5,499.2 849.0,492.1 850.0,494.0 852.0,498.2 854.0,497.6 856.0,495.6 857.5,498.9 859.0,497.0 861.5,498.6 864.0,497.4 865.5,496.1 867.5,499.4 869.5,496.4 871.5,499.4 873.5,499.9 875.5,494.8 878.0,498.5 879.5,497.5 881.5,498.0 883.0,496.8 884.5,497.5 886.5,497.9 888.5,495.1 891.0,499.0 893.5,494.9 895.0,497.6 896.5,496.0 899.0,500.0 901.5,494.6 903.0,498.8 905.0,495.6 906.0,495.7 908.0,494.2 910.0,498.2 912.5,499.2 914.5,494.0 916.5,498.2 919.0,496.5 921.5,497.9 924.0,498.2 926.5,495.1 928.5,495.9 929.5,499.4 931.5,498.3 933.0,499.1 934.0,497.7 936.5,498.0 939.0,499.8 940.0,494.2 941.5,498.3 943.0,497.1 945.0,496.7 947.0,497.1 948.5,497.1 950.5,495.3 952.5,497.1 955.0,499.9 956.0,495.5 957.0,494.1 959.0,497.8 961.0,495.6 963.5,496.4 965.0,500.0 967.0,495.3 968.0,498.9 970.0,497.9 971.5,496.1 973.5,496.8 975.5,497.9 977.5,496.1 979.0,498.2 981.0,498.1 983.5,498.8 986.0,495.8 988.0,497.7 989.5,494.9 991.5,494.3 993.0,498.7 994.5,495.0 995.5,497.9 996.5,497.5 998.0,498.7 999.5,495.3 1001.5,495.0 1003.5,499.9 1005.5,498.7 1007.0,497.0 1008.0,498.5 1009.0,497.3 1010.5,499.0 1012.5,494.4 1014.0,498.2 1015.5,497.2 1016.5,495.0 1019.0,497.4 1021.0,496.2 1023.5,494.5 1026.0,494.4 1027.5,498.9 1029.5,496.9 1030.5,495.3 1032.0,496.0 1033.5,496.0 1035.5,498.6 1037.5,496.1 1038.5,499.0 1040.5,496.4 1042.0,499.2 1043.5,497.9 1045.0,495.2 1046.5,497.5 1047.5,496.4 1049.5,499.9 1050.5,495.1 1052.5,502.0 1055.0,498.0 1057.5,497.9 1059.0,494.6 1060.0,496.5 1062.5,494.1 1064.0,498.7 1065.5,499.2 1066.5,495.9 1069.0,497.5 1071.0,493.7 1073.0,497.5 1075.0,494.4 1077.0,497.6 1078.5,496.9 1079.5,494.5" fill="none" stroke="#ff0000" stroke-width="1.3" stroke-linejoin="round" shape-rendering="auto"/><polyline points="101.3,492.0 101.3,512.0" fill="none" stroke="#00ff00" stroke-width="1.3" stroke-linejoin="round" shape-rendering="auto"/><polyline points="107.5,489.4 107.5,512.0" fill="none" stroke="#00ff00" stroke-width="1.3" stroke-linejoin="round" shape-rendering="auto"/><polyline points="121.0,481.0 128.3,497.7 128.3,512.0" fill="none" stroke="#00ff00" stroke-width="1.3" stroke-linejoin="round" shape-rendering="auto"/><polyline points="155.4,475.8 155.4,512.0" fill="none" stroke="#00ff00" stroke-width="1.3" stroke-linejoin="round" shape-rendering="auto"/><polyline points="172.5,495.6 172.5,512.0" fill="none" stroke="#00ff00" stroke-width="1.3" stroke-linejoin="round" shape-rendering="auto"/><polyline points="183.5,489.4 183.5,512.0" fill="none" stroke="#00ff00" stroke-width="1.3" stroke-linejoin="round" shape-rendering="auto"/><polyline points="217.0,504.4 224.6,504.4 224.6,490.4 224.6,512.0" fill="none" stroke="#00ff00" stroke-width="1.3" stroke-linejoin="round" shape-rendering="auto"/><polyline points="258.5,486.0 261.2,482.0 261.2,512.0" fill="none" stroke="#00ff00" stroke-width="1.3" stroke-linejoin="round" shape-rendering="auto"/><polyline points="282.5,493.5 282.5,512.0" fill="none" stroke="#00ff00" stroke-width="1.3" stroke-linejoin="round" shape-rendering="auto"/><polyline points="292.5,500.0 294.0,512.0" fill="none" stroke="#00ff00" stroke-width="1.3" stroke-linejoin="round" shape-rendering="auto"/><polyline points="320.0,504.5 324.0,503.5" fill="none" stroke="#00ff00" stroke-width="1.3" stroke-linejoin="round" shape-rendering="auto"/><polyline points="374.4,470.6 377.5,469.2 381.7,491.5 381.7,512.0" fill="none" stroke="#00ff00" stroke-width="1.3" stroke-linejoin="round" shape-rendering="auto"/><polyline points="408.3,475.2 408.3,512.0" fill="none" stroke="#00ff00" stroke-width="1.3" stroke-linejoin="round" shape-rendering="auto"/><polyline points="511.2,486.2 511.2,512.0" fill="none" stroke="#00ff00" stroke-width="1.3" stroke-linejoin="round" shape-rendering="auto"/><polyline points="528.5,498.8 528.5,512.0" fill="none" stroke="#00ff00" stroke-width="1.3" stroke-linejoin="round" shape-rendering="auto"/><polyline points="569.2,480.0 569.2,512.0" fill="none" stroke="#00ff00" stroke-width="1.3" stroke-linejoin="round" shape-rendering="auto"/><polyline points="616.2,506.0 620.4,480.0 620.4,512.0" fill="none" stroke="#00ff00" stroke-width="1.3" stroke-linejoin="round" shape-rendering="auto"/><polyline points="640.2,486.2 644.8,491.5 644.8,512.0" fill="none" stroke="#00ff00" stroke-width="1.3" stroke-linejoin="round" shape-rendering="auto"/><polyline points="651.2,501.9 651.2,512.0" fill="none" stroke="#00ff00" stroke-width="1.3" stroke-linejoin="round" shape-rendering="auto"/><polyline points="763.5,498.8 763.5,512.0" fill="none" stroke="#00ff00" stroke-width="1.3" stroke-linejoin="round" shape-rendering="auto"/><polyline points="818.3,489.0 818.3,512.0" fill="none" stroke="#00ff00" stroke-width="1.3" stroke-linejoin="round" shape-rendering="auto"/><polyline points="856.0,498.8 856.0,512.0" fill="none" stroke="#00ff00" stroke-width="1.3" stroke-linejoin="round" shape-rendering="auto"/><polyline points="941.5,494.0 941.5,512.0" fill="none" stroke="#00ff00" stroke-width="1.3" stroke-linejoin="round" shape-rendering="auto"/><polyline points="979.4,488.3 979.4,512.0" fill="none" stroke="#00ff00" stroke-width="1.3" stroke-linejoin="round" shape-rendering="auto"/></g><rect x="136" y="507" width="1" height="2" fill="#000"/><rect x="177" y="507" width="1" height="2" fill="#000"/><rect x="218" y="506" width="1" height="3" fill="#000"/><rect x="259" y="507" width="1" height="2" fill="#000"/><rect x="300" y="507" width="1" height="2" fill="#000"/><rect x="341" y="506" width="1" height="3" fill="#000"/><rect x="382" y="507" width="1" height="2" fill="#000"/><rect x="423" y="507" width="1" height="2" fill="#000"/><rect x="464" y="506" width="1" height="3" fill="#000"/><rect x="505" y="507" width="1" height="2" fill="#000"/><rect x="546" y="507" width="1" height="2" fill="#000"/><rect x="587" y="506" width="1" height="3" fill="#000"/><rect x="628" y="507" width="1" height="2" fill="#000"/><rect x="669" y="507" width="1" height="2" fill="#000"/><rect x="710" y="506" width="1" height="3" fill="#000"/><rect x="751" y="507" width="1" height="2" fill="#000"/><rect x="792" y="507" width="1" height="2" fill="#000"/><rect x="833" y="506" width="1" height="3" fill="#000"/><rect x="874" y="507" width="1" height="2" fill="#000"/><rect x="915" y="507" width="1" height="2" fill="#000"/><rect x="956" y="506" width="1" height="3" fill="#000"/><rect x="997" y="507" width="1" height="2" fill="#000"/><rect x="1038" y="507" width="1" height="2" fill="#000"/><rect x="95" y="420" width="986" height="1" fill="#000"/><rect x="95" y="509" width="986" height="1" fill="#000"/><rect x="95" y="420" width="1" height="90" fill="#000"/><rect x="1080" y="420" width="1" height="90" fill="#000"/><rect x="91" y="508" width="4" height="1" fill="#000"/><rect x="91" y="507" width="4" height="1" fill="#000"/><rect x="91" y="505" width="4" height="1" fill="#000"/><rect x="91" y="504" width="4" height="1" fill="#000"/><rect x="91" y="503" width="4" height="1" fill="#000"/><rect x="86" y="502" width="9" height="1" fill="#000"/><rect x="91" y="495" width="4" height="1" fill="#000"/><rect x="91" y="491" width="4" height="1" fill="#000"/><rect x="91" y="489" width="4" height="1" fill="#000"/><rect x="91" y="486" width="4" height="1" fill="#000"/><rect x="91" y="485" width="4" height="1" fill="#000"/><rect x="91" y="483" width="4" height="1" fill="#000"/><rect x="91" y="482" width="4" height="1" fill="#000"/><rect x="91" y="481" width="4" height="1" fill="#000"/><rect x="86" y="480" width="9" height="1" fill="#000"/><rect x="91" y="473" width="4" height="1" fill="#000"/><rect x="91" y="469" width="4" height="1" fill="#000"/><rect x="91" y="467" width="4" height="1" fill="#000"/><rect x="91" y="464" width="4" height="1" fill="#000"/><rect x="91" y="463" width="4" height="1" fill="#000"/><rect x="91" y="461" width="4" height="1" fill="#000"/><rect x="91" y="460" width="4" height="1" fill="#000"/><rect x="91" y="459" width="4" height="1" fill="#000"/><rect x="86" y="458" width="9" height="1" fill="#000"/><rect x="91" y="451" width="4" height="1" fill="#000"/><rect x="91" y="447" width="4" height="1" fill="#000"/><rect x="91" y="445" width="4" height="1" fill="#000"/><rect x="91" y="443" width="4" height="1" fill="#000"/><rect x="91" y="441" width="4" height="1" fill="#000"/><rect x="91" y="439" width="4" height="1" fill="#000"/><rect x="91" y="438" width="4" height="1" fill="#000"/><rect x="91" y="437" width="4" height="1" fill="#000"/><rect x="86" y="436" width="9" height="1" fill="#000"/><rect x="91" y="429" width="4" height="1" fill="#000"/><rect x="91" y="426" width="4" height="1" fill="#000"/><rect x="91" y="423" width="4" height="1" fill="#000"/><rect x="91" y="421" width="4" height="1" fill="#000"/><text x="50.9" y="444.8" font-size="13.5" textLength="15.6" lengthAdjust="spacingAndGlyphs" xml:space="preserve">10</text><text x="66.2" y="438.9" font-size="13.5" textLength="7.4" lengthAdjust="spacingAndGlyphs" xml:space="preserve">−</text><text x="74.2" y="438.9" font-size="13.5" textLength="8.2" lengthAdjust="spacingAndGlyphs" xml:space="preserve">9</text><text x="43.7" y="466.8" font-size="13.5" textLength="15.6" lengthAdjust="spacingAndGlyphs" xml:space="preserve">10</text><text x="59" y="460.9" font-size="13.5" textLength="7.4" lengthAdjust="spacingAndGlyphs" xml:space="preserve">−</text><text x="67" y="460.9" font-size="13.5" textLength="15.4" lengthAdjust="spacingAndGlyphs" xml:space="preserve">10</text><text x="43.7" y="488.8" font-size="13.5" textLength="15.6" lengthAdjust="spacingAndGlyphs" xml:space="preserve">10</text><text x="59" y="482.9" font-size="13.5" textLength="7.4" lengthAdjust="spacingAndGlyphs" xml:space="preserve">−</text><text x="67" y="482.9" font-size="13.5" textLength="15.4" lengthAdjust="spacingAndGlyphs" xml:space="preserve">11</text><text x="43.7" y="510.8" font-size="13.5" textLength="15.6" lengthAdjust="spacingAndGlyphs" xml:space="preserve">10</text><text x="59" y="504.9" font-size="13.5" textLength="7.4" lengthAdjust="spacingAndGlyphs" xml:space="preserve">−</text><text x="67" y="504.9" font-size="13.5" textLength="15.4" lengthAdjust="spacingAndGlyphs" xml:space="preserve">12</text><text transform="translate(33.2,503.1) rotate(-90)" x="0" y="0" font-size="13.5" textLength="76" lengthAdjust="spacingAndGlyphs" xml:space="preserve">P dyn/cm^2</text><line x1="1092" y1="427.5" x2="1104" y2="431.8" stroke="#0000ff" stroke-width="1.3" shape-rendering="auto"/><text x="1107.9" y="433.8" font-size="12.5" textLength="60.1" lengthAdjust="spacingAndGlyphs" xml:space="preserve">CHEMS−P</text><line x1="1092" y1="443.5" x2="1104" y2="447.8" stroke="#ff0000" stroke-width="1.3" shape-rendering="auto"/><text x="1107.9" y="449.8" font-size="12.5" textLength="58.8" lengthAdjust="spacingAndGlyphs" xml:space="preserve">LEMMS−P</text><line x1="1092" y1="459.5" x2="1104" y2="463.8" stroke="#00ff00" stroke-width="1.3" shape-rendering="auto"/><text x="1107.9" y="465.8" font-size="12.5" textLength="62.6" lengthAdjust="spacingAndGlyphs" xml:space="preserve">CHEMS−O</text><rect x="95" y="513" width="986" height="179" fill="#000"/><path d="M95 530h1v26h-1zM234 530h1v26h-1zM273 530h1v26h-1zM301 530h1v26h-1zM347 530h1v26h-1zM352 530h2v26h-2zM378 530h1v26h-1zM442 530h1v26h-1zM467 530h2v26h-2zM650 530h1v26h-1zM672 530h1v26h-1zM675 530h1v26h-1zM816 530h1v26h-1zM850 530h1v26h-1zM984 530h2v26h-2zM1014 530h1v26h-1zM95 605h1v13h-1zM116 605h2v13h-2zM269 605h1v13h-1zM466 605h1v13h-1zM531 605h1v13h-1zM535 605h1v13h-1zM598 605h2v13h-2zM630 605h1v13h-1zM678 605h2v13h-2zM701 605h1v13h-1zM814 605h2v13h-2zM818 605h2v13h-2zM837 605h1v13h-1zM904 605h1v13h-1zM940 605h1v13h-1zM961 605h1v13h-1zM990 605h1v13h-1zM95 630h1v46h-1zM157 630h1v46h-1zM476 630h1v46h-1zM507 630h1v46h-1zM737 630h1v46h-1zM819 630h1v46h-1zM1029 630h1v46h-1zM96 556h2v25h-2zM935 556h1v25h-1zM964 556h1v25h-1zM974 556h1v25h-1zM96 664h1v26h-1zM128 664h2v26h-2zM133 664h1v26h-1zM139 664h1v26h-1zM144 664h1v26h-1zM146 664h1v26h-1zM153 664h4v26h-4zM159 664h2v26h-2zM162 664h1v26h-1zM167 664h1v26h-1zM190 664h1v26h-1zM234 664h1v26h-1zM239 664h1v26h-1zM244 664h1v26h-1zM280 664h1v26h-1zM289 664h1v26h-1zM295 664h1v26h-1zM298 664h1v26h-1zM306 664h1v26h-1zM312 664h3v26h-3zM317 664h1v26h-1zM321 664h1v26h-1zM330 664h1v26h-1zM364 664h1v26h-1zM374 664h1v26h-1zM376 664h2v26h-2zM382 664h1v26h-1zM394 664h1v26h-1zM400 664h1v26h-1zM427 664h1v26h-1zM518 664h1v26h-1zM544 664h1v26h-1zM581 664h2v26h-2zM592 664h1v26h-1zM614 664h1v26h-1zM634 664h1v26h-1zM636 664h1v26h-1zM639 664h1v26h-1zM663 664h2v26h-2zM667 664h3v26h-3zM681 664h1v26h-1zM690 664h1v26h-1zM695 664h1v26h-1zM710 664h1v26h-1zM726 664h1v26h-1zM750 664h1v26h-1zM753 664h3v26h-3zM768 664h1v26h-1zM799 664h1v26h-1zM828 664h1v26h-1zM840 664h1v26h-1zM848 664h2v26h-2zM854 664h1v26h-1zM874 664h1v26h-1zM879 664h1v26h-1zM910 664h1v26h-1zM925 664h1v26h-1zM929 664h1v26h-1zM957 664h1v26h-1zM970 664h1v26h-1zM981 664h2v26h-2zM1005 664h2v26h-2zM1010 664h1v26h-1zM1015 664h1v26h-1zM1031 664h2v26h-2zM1036 664h1v26h-1zM1042 664h1v26h-1zM1047 664h1v26h-1zM1055 664h1v26h-1zM1066 664h1v26h-1zM1070 664h1v26h-1zM97 526h1v4h-1zM163 526h1v4h-1zM182 526h1v4h-1zM284 526h1v4h-1zM290 526h1v4h-1zM312 526h1v4h-1zM373 526h1v4h-1zM389 526h1v4h-1zM432 526h1v4h-1zM465 526h1v4h-1zM525 526h1v4h-1zM528 526h2v4h-2zM599 526h1v4h-1zM660 526h1v4h-1zM785 526h1v4h-1zM789 526h1v4h-1zM794 526h1v4h-1zM801 526h1v4h-1zM824 526h2v4h-2zM844 526h1v4h-1zM898 526h1v4h-1zM921 526h1v4h-1zM1010 526h1v4h-1zM1025 526h1v4h-1zM1027 526h2v4h-2zM1071 526h2v4h-2zM98 630h1v34h-1zM149 630h1v34h-1zM164 630h1v34h-1zM169 630h2v34h-2zM340 630h1v34h-1zM419 630h1v34h-1zM522 630h1v34h-1zM543 630h1v34h-1zM585 630h1v34h-1zM637 630h1v34h-1zM651 630h1v34h-1zM880 630h1v34h-1zM979 630h1v34h-1zM993 630h1v34h-1zM100 568h1v17h-1zM137 568h1v17h-1zM168 568h1v17h-1zM177 568h1v17h-1zM193 568h1v17h-1zM295 568h1v17h-1zM304 568h1v17h-1zM357 568h2v17h-2zM369 568h1v17h-1zM527 568h1v17h-1zM652 568h1v17h-1zM773 568h1v17h-1zM809 568h1v17h-1zM824 568h2v17h-2zM861 568h1v17h-1zM864 568h1v17h-1zM874 568h1v17h-1zM893 568h1v17h-1zM946 568h1v17h-1zM1056 568h1v17h-1zM1073 568h1v17h-1zM101 605h1v85h-1zM275 605h1v85h-1zM102 564h1v4h-1zM120 564h1v4h-1zM135 564h1v4h-1zM145 564h1v4h-1zM175 564h1v4h-1zM181 564h1v4h-1zM202 564h2v4h-2zM241 564h1v4h-1zM247 564h1v4h-1zM277 564h1v4h-1zM314 564h1v4h-1zM323 564h2v4h-2zM340 564h1v4h-1zM364 564h1v4h-1zM385 564h1v4h-1zM390 564h1v4h-1zM448 564h1v4h-1zM514 564h2v4h-2zM567 564h1v4h-1zM630 564h1v4h-1zM646 564h1v4h-1zM661 564h1v4h-1zM676 564h1v4h-1zM872 564h1v4h-1zM972 564h1v4h-1zM1054 564h1v4h-1zM1076 564h1v4h-1zM102 676h1v14h-1zM106 676h1v14h-1zM108 676h2v14h-2zM115 676h3v14h-3zM121 676h1v14h-1zM123 676h1v14h-1zM125 676h1v14h-1zM127 676h1v14h-1zM130 676h1v14h-1zM132 676h1v14h-1zM135 676h2v14h-2zM138 676h1v14h-1zM140 676h4v14h-4zM145 676h1v14h-1zM147 676h1v14h-1zM149 676h1v14h-1zM161 676h1v14h-1zM163 676h2v14h-2zM169 676h3v14h-3zM175 676h2v14h-2zM182 676h1v14h-1zM186 676h2v14h-2zM196 676h2v14h-2zM199 676h4v14h-4zM204 676h1v14h-1zM206 676h1v14h-1zM251 676h1v14h-1zM253 676h1v14h-1zM256 676h2v14h-2zM262 676h1v14h-1zM269 676h1v14h-1zM272 676h1v14h-1zM274 676h1v14h-1zM276 676h2v14h-2zM282 676h1v14h-1zM287 676h1v14h-1zM290 676h1v14h-1zM292 676h2v14h-2zM301 676h3v14h-3zM308 676h2v14h-2zM311 676h1v14h-1zM325 676h1v14h-1zM335 676h3v14h-3zM339 676h1v14h-1zM341 676h1v14h-1zM352 676h2v14h-2zM355 676h1v14h-1zM357 676h1v14h-1zM360 676h3v14h-3zM365 676h3v14h-3zM371 676h1v14h-1zM373 676h1v14h-1zM383 676h2v14h-2zM388 676h2v14h-2zM391 676h2v14h-2zM397 676h1v14h-1zM404 676h1v14h-1zM409 676h1v14h-1zM417 676h1v14h-1zM430 676h1v14h-1zM451 676h1v14h-1zM453 676h3v14h-3zM462 676h1v14h-1zM464 676h1v14h-1zM471 676h1v14h-1zM473 676h1v14h-1zM480 676h2v14h-2zM486 676h1v14h-1zM490 676h1v14h-1zM493 676h2v14h-2zM499 676h2v14h-2zM505 676h1v14h-1zM508 676h1v14h-1zM516 676h1v14h-1zM522 676h1v14h-1zM525 676h3v14h-3zM533 676h1v14h-1zM535 676h1v14h-1zM541 676h1v14h-1zM548 676h1v14h-1zM554 676h2v14h-2zM558 676h1v14h-1zM560 676h1v14h-1zM574 676h1v14h-1zM578 676h1v14h-1zM583 676h1v14h-1zM586 676h1v14h-1zM616 676h2v14h-2zM632 676h2v14h-2zM642 676h2v14h-2zM660 676h1v14h-1zM674 676h1v14h-1zM682 676h1v14h-1zM684 676h1v14h-1zM688 676h1v14h-1zM692 676h1v14h-1zM697 676h1v14h-1zM702 676h1v14h-1zM705 676h2v14h-2zM708 676h1v14h-1zM712 676h1v14h-1zM718 676h1v14h-1zM721 676h2v14h-2zM729 676h1v14h-1zM739 676h1v14h-1zM742 676h1v14h-1zM748 676h2v14h-2zM759 676h2v14h-2zM762 676h4v14h-4zM767 676h1v14h-1zM770 676h1v14h-1zM779 676h1v14h-1zM782 676h1v14h-1zM785 676h1v14h-1zM789 676h1v14h-1zM800 676h2v14h-2zM808 676h2v14h-2zM812 676h1v14h-1zM814 676h1v14h-1zM822 676h2v14h-2zM838 676h2v14h-2zM841 676h2v14h-2zM852 676h1v14h-1zM856 676h1v14h-1zM860 676h1v14h-1zM862 676h3v14h-3zM867 676h2v14h-2zM872 676h1v14h-1zM877 676h1v14h-1zM880 676h3v14h-3zM891 676h1v14h-1zM893 676h1v14h-1zM895 676h3v14h-3zM899 676h1v14h-1zM902 676h3v14h-3zM908 676h2v14h-2zM913 676h1v14h-1zM919 676h2v14h-2zM922 676h3v14h-3zM926 676h1v14h-1zM934 676h2v14h-2zM950 676h3v14h-3zM959 676h2v14h-2zM964 676h1v14h-1zM968 676h1v14h-1zM974 676h1v14h-1zM977 676h1v14h-1zM979 676h1v14h-1zM987 676h1v14h-1zM990 676h1v14h-1zM993 676h1v14h-1zM995 676h2v14h-2zM1001 676h1v14h-1zM1004 676h1v14h-1zM1008 676h2v14h-2zM1012 676h1v14h-1zM1024 676h2v14h-2zM1040 676h2v14h-2zM1045 676h1v14h-1zM1054 676h1v14h-1zM1056 676h1v14h-1zM1072 676h1v14h-1zM103 585h1v45h-1zM156 585h1v45h-1zM182 585h1v45h-1zM241 585h1v45h-1zM376 585h1v45h-1zM586 585h2v45h-2zM663 585h1v45h-1zM721 585h1v45h-1zM733 585h1v45h-1zM803 585h1v45h-1zM870 585h1v45h-1zM1054 585h1v45h-1zM104 564h1v21h-1zM169 564h1v21h-1zM398 564h2v21h-2zM664 564h1v21h-1zM667 564h1v21h-1zM670 564h1v21h-1zM691 564h1v21h-1zM694 564h1v21h-1zM936 564h1v21h-1zM1058 564h1v21h-1zM105 618h1v29h-1zM344 618h1v29h-1zM347 618h1v29h-1zM366 618h1v29h-1zM560 618h1v29h-1zM912 618h1v29h-1zM917 618h1v29h-1zM947 618h1v29h-1zM972 618h1v29h-1zM977 618h1v29h-1zM1036 618h1v29h-1zM1055 618h1v29h-1zM106 526h1v25h-1zM142 526h1v25h-1zM168 526h1v25h-1zM170 526h1v25h-1zM191 526h1v25h-1zM335 526h1v25h-1zM404 526h1v25h-1zM445 526h2v25h-2zM450 526h2v25h-2zM691 526h1v25h-1zM750 526h1v25h-1zM767 526h1v25h-1zM813 526h1v25h-1zM826 526h1v25h-1zM832 526h1v25h-1zM847 526h1v25h-1zM855 526h1v25h-1zM891 526h1v25h-1zM917 526h1v25h-1zM962 526h1v25h-1zM106 559h1v22h-1zM136 559h1v22h-1zM250 559h1v22h-1zM280 559h1v22h-1zM452 559h1v22h-1zM462 559h1v22h-1zM606 559h1v22h-1zM916 559h1v22h-1zM1014 559h1v22h-1zM107 581h1v95h-1zM109 551h1v5h-1zM255 551h1v5h-1zM277 551h1v5h-1zM308 551h1v5h-1zM341 551h1v5h-1zM365 551h1v5h-1zM390 551h1v5h-1zM560 551h1v5h-1zM828 551h1v5h-1zM856 551h1v5h-1zM881 551h1v5h-1zM954 551h1v5h-1zM110 647h1v29h-1zM118 647h1v29h-1zM180 647h1v29h-1zM259 647h1v29h-1zM294 647h1v29h-1zM310 647h1v29h-1zM351 647h1v29h-1zM386 647h1v29h-1zM431 647h1v29h-1zM449 647h1v29h-1zM700 647h1v29h-1zM711 647h1v29h-1zM943 647h1v29h-1zM980 647h1v29h-1zM1059 647h1v29h-1zM111 581h1v4h-1zM303 581h1v4h-1zM352 581h1v4h-1zM387 581h1v4h-1zM390 581h1v4h-1zM432 581h1v4h-1zM608 581h1v4h-1zM668 581h1v4h-1zM918 581h1v4h-1zM1013 581h1v4h-1zM112 514h1v9h-1zM345 514h1v9h-1zM865 514h1v9h-1zM112 556h1v3h-1zM166 556h1v3h-1zM235 556h1v3h-1zM244 556h2v3h-2zM272 556h1v3h-1zM279 556h1v3h-1zM281 556h1v3h-1zM355 556h1v3h-1zM383 556h3v3h-3zM396 556h1v3h-1zM550 556h1v3h-1zM570 556h1v3h-1zM600 556h1v3h-1zM686 556h1v3h-1zM695 556h1v3h-1zM806 556h1v3h-1zM824 556h2v3h-2zM853 556h1v3h-1zM861 556h1v3h-1zM883 556h2v3h-2zM913 556h1v3h-1zM1052 556h2v3h-2zM1061 556h1v3h-1zM112 618h1v72h-1zM250 618h1v72h-1zM320 618h1v72h-1zM332 618h2v72h-2zM601 618h1v72h-1zM672 618h1v72h-1zM113 530h1v34h-1zM466 530h1v34h-1zM613 530h1v34h-1zM677 530h1v34h-1zM858 530h1v34h-1zM912 530h1v34h-1zM1075 530h1v34h-1zM1077 530h1v34h-1zM113 647h1v43h-1zM131 647h1v43h-1zM134 647h1v43h-1zM137 647h1v43h-1zM158 647h1v43h-1zM237 647h1v43h-1zM268 647h1v43h-1zM307 647h1v43h-1zM316 647h1v43h-1zM323 647h2v43h-2zM327 647h1v43h-1zM331 647h1v43h-1zM370 647h1v43h-1zM375 647h1v43h-1zM380 647h1v43h-1zM385 647h1v43h-1zM401 647h1v43h-1zM444 647h1v43h-1zM467 647h2v43h-2zM523 647h1v43h-1zM552 647h1v43h-1zM563 647h1v43h-1zM568 647h1v43h-1zM570 647h1v43h-1zM609 647h1v43h-1zM615 647h1v43h-1zM635 647h1v43h-1zM656 647h1v43h-1zM659 647h1v43h-1zM665 647h1v43h-1zM671 647h1v43h-1zM675 647h1v43h-1zM679 647h1v43h-1zM732 647h1v43h-1zM835 647h1v43h-1zM890 647h1v43h-1zM932 647h1v43h-1zM1011 647h1v43h-1zM1037 647h1v43h-1zM1050 647h1v43h-1zM115 647h1v17h-1zM132 647h1v17h-1zM141 647h1v17h-1zM145 647h1v17h-1zM148 647h1v17h-1zM163 647h1v17h-1zM187 647h1v17h-1zM240 647h1v17h-1zM252 647h1v17h-1zM293 647h1v17h-1zM303 647h1v17h-1zM308 647h1v17h-1zM373 647h1v17h-1zM383 647h2v17h-2zM388 647h1v17h-1zM390 647h1v17h-1zM403 647h1v17h-1zM511 647h1v17h-1zM545 647h2v17h-2zM578 647h1v17h-1zM608 647h1v17h-1zM641 647h1v17h-1zM648 647h1v17h-1zM658 647h1v17h-1zM698 647h1v17h-1zM734 647h1v17h-1zM770 647h1v17h-1zM775 647h1v17h-1zM781 647h1v17h-1zM785 647h1v17h-1zM792 647h1v17h-1zM827 647h1v17h-1zM830 647h1v17h-1zM864 647h1v17h-1zM984 647h2v17h-2zM1016 647h1v17h-1zM1079 647h1v17h-1zM118 559h1v59h-1zM777 559h1v59h-1zM1064 559h1v59h-1zM119 630h1v60h-1zM166 630h1v60h-1zM220 630h1v60h-1zM304 630h1v60h-1zM378 630h1v60h-1zM662 630h1v60h-1zM670 630h1v60h-1zM816 630h1v60h-1zM888 630h1v60h-1zM1076 630h1v60h-1zM124 556h1v12h-1zM604 556h1v12h-1zM880 556h1v12h-1zM1057 556h1v12h-1zM126 664h1v12h-1zM177 664h1v12h-1zM203 664h1v12h-1zM215 664h1v12h-1zM263 664h1v12h-1zM278 664h1v12h-1zM288 664h1v12h-1zM398 664h1v12h-1zM413 664h2v12h-2zM437 664h1v12h-1zM532 664h1v12h-1zM595 664h1v12h-1zM602 664h1v12h-1zM612 664h1v12h-1zM645 664h1v12h-1zM655 664h1v12h-1zM680 664h1v12h-1zM694 664h1v12h-1zM699 664h1v12h-1zM723 664h2v12h-2zM769 664h1v12h-1zM778 664h1v12h-1zM824 664h1v12h-1zM845 664h1v12h-1zM853 664h1v12h-1zM938 664h1v12h-1zM942 664h1v12h-1zM955 664h1v12h-1zM965 664h1v12h-1zM983 664h1v12h-1zM1000 664h1v12h-1zM1080 664h1v12h-1zM127 559h1v46h-1zM459 559h1v46h-1zM596 559h1v46h-1zM749 559h1v46h-1zM807 559h1v46h-1zM130 530h1v21h-1zM148 530h1v21h-1zM153 530h1v21h-1zM162 530h1v21h-1zM188 530h1v21h-1zM435 530h1v21h-1zM546 530h1v21h-1zM605 530h2v21h-2zM646 530h1v21h-1zM667 530h1v21h-1zM688 530h1v21h-1zM690 530h1v21h-1zM760 530h1v21h-1zM786 530h1v21h-1zM852 530h2v21h-2zM916 530h1v21h-1zM939 530h1v21h-1zM942 530h2v21h-2zM957 530h1v21h-1zM974 530h1v21h-1zM1013 530h1v21h-1zM132 559h1v5h-1zM141 559h1v5h-1zM180 559h1v5h-1zM260 559h1v5h-1zM275 559h1v5h-1zM313 559h1v5h-1zM393 559h1v5h-1zM461 559h1v5h-1zM564 559h1v5h-1zM638 559h1v5h-1zM662 559h1v5h-1zM675 559h1v5h-1zM709 559h1v5h-1zM797 559h1v5h-1zM929 559h1v5h-1zM1004 559h1v5h-1zM1018 559h2v5h-2zM139 568h1v13h-1zM170 568h1v13h-1zM197 568h1v13h-1zM238 568h1v13h-1zM257 568h1v13h-1zM278 568h1v13h-1zM308 568h1v13h-1zM335 568h1v13h-1zM342 568h1v13h-1zM355 568h1v13h-1zM388 568h1v13h-1zM407 568h1v13h-1zM521 568h1v13h-1zM609 568h1v13h-1zM639 568h1v13h-1zM684 568h1v13h-1zM688 568h1v13h-1zM764 568h1v13h-1zM865 568h1v13h-1zM931 568h1v13h-1zM947 568h1v13h-1zM1004 568h1v13h-1zM1007 568h1v13h-1zM1020 568h1v13h-1zM1075 568h1v13h-1zM142 630h1v17h-1zM175 630h1v17h-1zM204 630h1v17h-1zM221 630h1v17h-1zM248 630h1v17h-1zM281 630h1v17h-1zM289 630h1v17h-1zM297 630h1v17h-1zM346 630h1v17h-1zM362 630h1v17h-1zM407 630h1v17h-1zM460 630h1v17h-1zM484 630h1v17h-1zM550 630h1v17h-1zM571 630h1v17h-1zM626 630h1v17h-1zM650 630h1v17h-1zM717 630h1v17h-1zM746 630h2v17h-2zM801 630h1v17h-1zM823 630h1v17h-1zM832 630h1v17h-1zM847 630h1v17h-1zM892 630h1v17h-1zM895 630h2v17h-2zM939 630h1v17h-1zM964 630h1v17h-1zM1022 630h1v17h-1zM147 523h1v36h-1zM694 523h1v36h-1zM148 559h1v9h-1zM232 559h2v9h-2zM317 559h1v9h-1zM370 559h3v9h-3zM536 559h1v9h-1zM557 559h1v9h-1zM704 559h1v9h-1zM711 559h1v9h-1zM795 559h1v9h-1zM914 559h2v9h-2zM944 559h2v9h-2zM1041 559h1v9h-1zM150 556h1v8h-1zM152 556h1v8h-1zM405 556h1v8h-1zM407 556h1v8h-1zM439 556h1v8h-1zM603 556h1v8h-1zM622 556h1v8h-1zM684 556h1v8h-1zM698 556h1v8h-1zM775 556h1v8h-1zM865 556h1v8h-1zM976 556h1v8h-1zM1038 556h2v8h-2zM1047 556h1v8h-1zM150 568h2v37h-2zM327 568h1v37h-1zM541 568h1v37h-1zM700 568h1v37h-1zM857 568h1v37h-1zM900 568h2v37h-2zM155 564h1v66h-1zM373 564h1v66h-1zM569 564h1v66h-1zM728 564h1v66h-1zM163 585h1v20h-1zM175 585h1v20h-1zM239 585h1v20h-1zM274 585h1v20h-1zM312 585h1v20h-1zM334 585h1v20h-1zM359 585h2v20h-2zM372 585h1v20h-1zM441 585h1v20h-1zM467 585h2v20h-2zM592 585h1v20h-1zM653 585h1v20h-1zM683 585h1v20h-1zM780 585h1v20h-1zM826 585h1v20h-1zM829 585h1v20h-1zM832 585h1v20h-1zM839 585h1v20h-1zM934 585h2v20h-2zM948 585h2v20h-2zM954 585h1v20h-1zM1077 585h2v20h-2zM176 564h1v17h-1zM189 564h1v17h-1zM249 564h1v17h-1zM273 564h1v17h-1zM331 564h1v17h-1zM381 564h1v17h-1zM455 564h1v17h-1zM471 564h1v17h-1zM477 564h1v17h-1zM568 564h1v17h-1zM689 564h1v17h-1zM758 564h1v17h-1zM808 564h1v17h-1zM818 564h2v17h-2zM891 564h1v17h-1zM930 564h1v17h-1zM1055 564h1v17h-1zM1062 564h2v17h-2zM181 605h1v71h-1zM342 605h1v71h-1zM576 605h1v71h-1zM886 605h2v71h-2zM183 556h1v49h-1zM185 530h1v29h-1zM344 530h1v29h-1zM387 530h1v29h-1zM398 530h2v29h-2zM402 530h1v29h-1zM410 530h1v29h-1zM428 530h1v29h-1zM436 530h1v29h-1zM539 530h1v29h-1zM741 530h2v29h-2zM1026 530h1v29h-1zM1062 530h1v29h-1zM190 523h1v33h-1zM929 523h1v33h-1zM197 585h1v33h-1zM277 585h1v33h-1zM307 585h1v33h-1zM321 585h2v33h-2zM685 585h1v33h-1zM760 585h1v33h-1zM783 585h2v33h-2zM842 585h1v33h-1zM898 585h1v33h-1zM911 585h1v33h-1zM931 585h1v33h-1zM1026 585h1v33h-1zM202 526h1v33h-1zM310 526h1v33h-1zM681 526h1v33h-1zM812 526h1v33h-1zM925 526h1v33h-1zM1050 526h1v33h-1zM203 581h1v37h-1zM370 581h2v37h-2zM403 581h1v37h-1zM674 581h1v37h-1zM205 585h1v105h-1zM408 585h1v105h-1zM647 585h1v105h-1zM228 523h1v58h-1zM235 523h1v7h-1zM358 523h1v7h-1zM396 523h1v7h-1zM768 523h1v7h-1zM946 523h1v7h-1zM1057 523h1v7h-1zM236 564h1v54h-1zM337 564h1v54h-1zM1061 564h1v54h-1zM239 526h1v30h-1zM258 526h1v30h-1zM275 526h1v30h-1zM348 526h1v30h-1zM380 526h1v30h-1zM418 526h1v30h-1zM495 526h1v30h-1zM575 526h1v30h-1zM608 526h1v30h-1zM669 526h1v30h-1zM751 526h2v30h-2zM919 526h1v30h-1zM240 523h1v28h-1zM280 523h1v28h-1zM314 523h1v28h-1zM574 523h1v28h-1zM885 523h1v28h-1zM1056 523h1v28h-1zM270 605h1v59h-1zM709 605h1v59h-1zM276 568h1v50h-1zM540 568h1v50h-1zM283 568h1v62h-1zM687 568h1v62h-1zM294 559h1v26h-1zM666 559h1v26h-1zM855 559h1v26h-1zM296 564h1v41h-1zM386 564h1v41h-1zM959 564h2v41h-2zM319 581h1v83h-1zM320 514h1v12h-1zM886 514h2v12h-2zM326 551h1v8h-1zM458 551h1v8h-1zM720 551h1v8h-1zM327 618h1v12h-1zM336 618h1v12h-1zM351 618h1v12h-1zM359 618h1v12h-1zM443 618h1v12h-1zM453 618h1v12h-1zM512 618h1v12h-1zM659 618h1v12h-1zM702 618h1v12h-1zM705 618h1v12h-1zM808 618h1v12h-1zM854 618h1v12h-1zM857 618h1v12h-1zM929 618h1v12h-1zM944 618h2v12h-2zM354 581h1v49h-1zM513 581h1v49h-1zM622 581h1v49h-1zM636 581h1v49h-1zM374 523h1v3h-1zM397 523h1v3h-1zM591 523h1v3h-1zM639 523h1v3h-1zM666 523h1v3h-1zM719 523h2v3h-2zM871 523h1v3h-1zM940 523h2v3h-2zM1055 523h1v3h-1zM1075 523h1v3h-1zM391 526h1v38h-1zM648 526h1v38h-1zM652 526h1v38h-1zM1022 526h1v38h-1zM429 568h1v96h-1zM496 568h1v96h-1zM478 581h1v24h-1zM603 581h1v24h-1zM635 581h1v24h-1zM493 585h1v79h-1zM756 585h2v79h-2zM518 568h1v79h-1zM729 568h1v79h-1zM528 585h2v62h-2zM856 585h1v62h-1zM942 585h1v62h-1zM986 585h1v62h-1zM534 568h1v122h-1zM607 605h1v25h-1zM806 605h1v25h-1zM834 605h1v25h-1zM874 605h1v25h-1zM649 530h1v38h-1zM707 530h1v38h-1zM1074 530h1v38h-1zM656 551h1v17h-1zM988 551h1v17h-1zM688 618h1v46h-1zM812 618h1v46h-1zM900 618h1v46h-1zM717 530h1v88h-1zM836 530h1v88h-1zM735 618h1v58h-1zM771 605h1v42h-1zM788 605h1v42h-1zM1038 605h2v42h-2zM781 530h1v100h-1zM802 559h1v117h-1zM813 556h1v74h-1zM1033 556h2v74h-2zM866 551h1v34h-1zM875 530h1v51h-1zM894 530h1v51h-1zM1000 530h1v51h-1zM908 556h2v29h-2zM928 556h1v29h-1zM1040 556h1v29h-1zM989 585h1v91h-1zM1035 581h1v109h-1zM1036 514h1v45h-1zM1037 530h1v55h-1zM1051 551h1v13h-1zM1068 556h1v91h-1z" fill="url(#iong)"/><path d="M96 526h1v4h-1zM102 526h1v4h-1zM291 526h1v4h-1zM526 526h1v4h-1zM598 526h1v4h-1zM706 526h1v4h-1zM744 526h1v4h-1zM859 526h1v4h-1zM868 526h1v4h-1zM918 526h1v4h-1zM920 526h1v4h-1zM1076 526h1v4h-1zM97 664h1v26h-1zM100 664h1v26h-1zM193 664h1v26h-1zM299 664h1v26h-1zM318 664h1v26h-1zM328 664h2v26h-2zM346 664h1v26h-1zM368 664h1v26h-1zM393 664h1v26h-1zM549 664h1v26h-1zM673 664h1v26h-1zM837 664h1v26h-1zM850 664h1v26h-1zM855 664h1v26h-1zM859 664h1v26h-1zM928 664h1v26h-1zM1002 664h1v26h-1zM1007 664h1v26h-1zM1043 664h1v26h-1zM1069 664h1v26h-1zM98 676h2v14h-2zM103 676h2v14h-2zM122 676h1v14h-1zM148 676h1v14h-1zM172 676h1v14h-1zM189 676h1v14h-1zM191 676h1v14h-1zM195 676h1v14h-1zM229 676h1v14h-1zM254 676h1v14h-1zM264 676h1v14h-1zM291 676h1v14h-1zM319 676h1v14h-1zM322 676h1v14h-1zM350 676h1v14h-1zM356 676h1v14h-1zM358 676h2v14h-2zM363 676h1v14h-1zM379 676h1v14h-1zM381 676h1v14h-1zM390 676h1v14h-1zM396 676h1v14h-1zM411 676h1v14h-1zM418 676h1v14h-1zM422 676h1v14h-1zM424 676h1v14h-1zM450 676h1v14h-1zM459 676h1v14h-1zM463 676h1v14h-1zM465 676h1v14h-1zM472 676h1v14h-1zM506 676h1v14h-1zM513 676h1v14h-1zM517 676h1v14h-1zM521 676h1v14h-1zM537 676h1v14h-1zM561 676h1v14h-1zM573 676h1v14h-1zM577 676h1v14h-1zM587 676h1v14h-1zM597 676h1v14h-1zM603 676h1v14h-1zM630 676h2v14h-2zM666 676h1v14h-1zM676 676h3v14h-3zM685 676h3v14h-3zM689 676h1v14h-1zM693 676h1v14h-1zM696 676h1v14h-1zM703 676h1v14h-1zM741 676h1v14h-1zM743 676h1v14h-1zM756 676h2v14h-2zM772 676h1v14h-1zM787 676h1v14h-1zM794 676h1v14h-1zM815 676h1v14h-1zM820 676h1v14h-1zM829 676h2v14h-2zM833 676h1v14h-1zM836 676h1v14h-1zM875 676h1v14h-1zM878 676h1v14h-1zM885 676h1v14h-1zM916 676h1v14h-1zM921 676h1v14h-1zM931 676h1v14h-1zM933 676h1v14h-1zM940 676h2v14h-2zM946 676h1v14h-1zM953 676h1v14h-1zM976 676h1v14h-1zM986 676h1v14h-1zM1022 676h2v14h-2zM1048 676h1v14h-1zM1061 676h1v14h-1zM1064 676h1v14h-1zM1073 676h1v14h-1zM99 630h1v34h-1zM198 630h1v34h-1zM424 630h1v34h-1zM652 630h1v34h-1zM843 630h1v34h-1zM108 551h1v5h-1zM498 551h1v5h-1zM993 551h1v5h-1zM1030 551h1v5h-1zM111 664h1v12h-1zM114 664h1v12h-1zM120 664h1v12h-1zM124 664h1v12h-1zM152 664h1v12h-1zM165 664h1v12h-1zM194 664h1v12h-1zM246 664h1v12h-1zM265 664h2v12h-2zM297 664h1v12h-1zM345 664h1v12h-1zM399 664h1v12h-1zM503 664h1v12h-1zM594 664h1v12h-1zM683 664h1v12h-1zM766 664h1v12h-1zM825 664h1v12h-1zM832 664h1v12h-1zM966 664h2v12h-2zM114 526h1v25h-1zM292 526h1v25h-1zM385 526h1v25h-1zM845 526h1v25h-1zM904 526h1v25h-1zM926 526h1v25h-1zM928 526h1v25h-1zM119 568h1v17h-1zM305 568h1v17h-1zM366 568h1v17h-1zM651 568h1v17h-1zM740 568h1v17h-1zM990 568h1v17h-1zM1022 568h1v17h-1zM123 564h1v21h-1zM1024 564h1v21h-1zM126 568h1v37h-1zM347 568h1v37h-1zM428 568h1v37h-1zM852 568h1v37h-1zM923 568h1v37h-1zM127 618h1v46h-1zM379 618h1v46h-1zM871 618h1v46h-1zM901 618h1v46h-1zM130 559h1v22h-1zM605 559h1v22h-1zM782 559h1v22h-1zM943 559h1v22h-1zM133 585h2v20h-2zM158 585h1v20h-1zM199 585h1v20h-1zM204 585h1v20h-1zM340 585h1v20h-1zM355 585h1v20h-1zM422 585h1v20h-1zM495 585h1v20h-1zM654 585h1v20h-1zM676 585h1v20h-1zM769 585h1v20h-1zM869 585h1v20h-1zM878 585h1v20h-1zM135 647h1v17h-1zM140 647h1v17h-1zM309 647h1v17h-1zM322 647h1v17h-1zM657 647h1v17h-1zM678 647h1v17h-1zM786 647h1v17h-1zM805 647h1v17h-1zM817 647h1v17h-1zM860 647h1v17h-1zM1017 647h1v17h-1zM1065 647h1v17h-1zM145 523h1v28h-1zM687 523h1v28h-1zM149 526h1v42h-1zM151 556h1v8h-1zM345 556h1v8h-1zM406 556h1v8h-1zM527 556h1v8h-1zM1071 556h1v8h-1zM154 530h1v21h-1zM174 530h1v21h-1zM298 530h1v21h-1zM511 530h1v21h-1zM545 530h1v21h-1zM685 530h1v21h-1zM774 530h1v21h-1zM1054 530h1v21h-1zM159 564h1v17h-1zM735 564h1v17h-1zM876 564h1v17h-1zM1065 564h1v17h-1zM164 530h1v26h-1zM285 530h1v26h-1zM487 530h1v26h-1zM727 530h1v26h-1zM968 530h1v26h-1zM164 568h1v13h-1zM341 568h1v13h-1zM393 568h2v13h-2zM436 568h1v13h-1zM458 568h1v13h-1zM932 568h1v13h-1zM956 568h1v13h-1zM1030 568h1v13h-1zM165 530h1v34h-1zM206 530h1v34h-1zM237 530h1v34h-1zM362 530h1v34h-1zM369 530h1v34h-1zM535 530h1v34h-1zM585 530h1v34h-1zM740 530h1v34h-1zM1078 530h1v34h-1zM206 630h1v17h-1zM260 630h1v17h-1zM392 630h1v17h-1zM483 630h1v17h-1zM567 630h1v17h-1zM669 630h1v17h-1zM839 630h1v17h-1zM211 605h1v13h-1zM664 605h1v13h-1zM739 605h1v13h-1zM924 605h1v13h-1zM936 605h1v13h-1zM941 605h1v13h-1zM943 605h1v13h-1zM219 530h1v55h-1zM328 530h1v55h-1zM983 530h1v55h-1zM222 581h1v4h-1zM348 581h2v4h-2zM762 581h1v4h-1zM248 526h1v30h-1zM349 526h1v30h-1zM392 526h1v30h-1zM950 526h1v30h-1zM249 647h1v29h-1zM283 647h1v29h-1zM531 647h1v29h-1zM661 647h1v29h-1zM876 647h1v29h-1zM915 647h1v29h-1zM251 559h1v9h-1zM882 559h1v9h-1zM910 559h1v9h-1zM965 559h1v9h-1zM969 559h1v9h-1zM1072 559h1v9h-1zM258 564h1v41h-1zM361 564h1v41h-1zM267 647h1v43h-1zM300 647h1v43h-1zM372 647h1v43h-1zM416 647h1v43h-1zM831 647h1v43h-1zM1049 647h1v43h-1zM1067 647h1v43h-1zM286 581h1v66h-1zM293 564h1v4h-1zM338 564h1v4h-1zM344 564h1v4h-1zM417 564h1v4h-1zM447 564h1v4h-1zM533 564h1v4h-1zM692 564h1v4h-1zM817 564h1v4h-1zM826 564h1v4h-1zM1035 564h1v4h-1zM1044 564h1v4h-1zM297 526h1v38h-1zM651 526h1v38h-1zM1043 526h1v38h-1zM298 523h1v3h-1zM365 523h1v3h-1zM388 523h1v3h-1zM816 523h1v3h-1zM1024 523h1v3h-1zM305 630h1v60h-1zM348 630h2v60h-2zM387 630h1v60h-1zM844 630h1v60h-1zM930 630h1v60h-1zM311 526h1v33h-1zM331 526h1v33h-1zM1049 526h1v33h-1zM315 530h1v38h-1zM763 530h1v38h-1zM326 618h1v72h-1zM369 618h1v72h-1zM866 618h1v72h-1zM338 630h1v46h-1zM343 630h1v46h-1zM818 630h1v46h-1zM357 523h1v7h-1zM958 523h1v7h-1zM374 585h1v33h-1zM494 585h1v33h-1zM498 585h1v33h-1zM795 585h1v33h-1zM964 585h1v33h-1zM1025 585h1v33h-1zM1032 585h1v33h-1zM375 585h1v45h-1zM722 585h1v45h-1zM889 585h1v45h-1zM1009 585h1v45h-1zM381 605h1v25h-1zM382 618h1v29h-1zM497 618h1v29h-1zM768 618h1v29h-1zM969 618h1v29h-1zM394 559h1v5h-1zM508 559h1v5h-1zM668 559h1v5h-1zM768 559h1v5h-1zM776 559h1v5h-1zM798 559h1v5h-1zM893 559h1v5h-1zM400 618h1v12h-1zM677 618h1v12h-1zM1007 618h1v12h-1zM1071 618h1v12h-1zM402 581h1v95h-1zM479 581h1v24h-1zM913 581h1v24h-1zM541 530h1v29h-1zM593 530h1v29h-1zM1063 530h1v29h-1zM594 605h2v42h-2zM725 605h1v42h-1zM1069 605h2v42h-2zM597 556h1v12h-1zM678 556h2v12h-2zM713 556h2v12h-2zM612 551h1v8h-1zM719 551h1v8h-1zM733 551h1v8h-1zM665 526h1v79h-1zM737 568h1v50h-1zM853 568h1v50h-1zM750 559h1v71h-1zM758 585h1v62h-1zM987 585h1v62h-1zM761 605h1v59h-1zM799 556h1v3h-1zM872 556h1v3h-1zM973 556h1v3h-1zM810 581h1v49h-1zM860 530h1v51h-1zM892 514h1v12h-1zM969 514h1v12h-1zM934 556h1v25h-1zM956 523h1v33h-1zM1023 559h1v26h-1zM1045 551h1v30h-1zM1079 581h1v37h-1z" fill="url(#iongd)"/><path d="M97 683h5v7h-5zM103 683h2v7h-2zM106 683h1v7h-1zM108 683h2v7h-2zM112 683h2v7h-2zM115 683h3v7h-3zM119 683h1v7h-1zM122 683h2v7h-2zM125 683h1v7h-1zM127 683h5v7h-5zM133 683h2v7h-2zM141 683h3v7h-3zM145 683h5v7h-5zM153 683h3v7h-3zM158 683h1v7h-1zM160 683h5v7h-5zM166 683h2v7h-2zM169 683h2v7h-2zM172 683h1v7h-1zM197 683h1v7h-1zM199 683h2v7h-2zM204 683h2v7h-2zM312 683h3v7h-3zM316 683h18v7h-18zM335 683h3v7h-3zM339 683h1v7h-1zM341 683h1v7h-1zM346 683h1v7h-1zM349 683h2v7h-2zM352 683h2v7h-2zM355 683h19v7h-19zM376 683h4v7h-4zM381 683h5v7h-5zM389 683h6v7h-6zM397 683h1v7h-1zM400 683h1v7h-1zM656 683h1v7h-1zM659 683h2v7h-2zM662 683h6v7h-6zM669 683h2v7h-2zM672 683h8v7h-8zM681 683h1v7h-1zM685 683h6v7h-6zM693 683h1v7h-1zM789 683h1v7h-1zM815 683h2v7h-2zM820 683h1v7h-1zM823 683h1v7h-1zM855 683h2v7h-2zM859 683h1v7h-1zM863 683h2v7h-2zM875 683h1v7h-1zM877 683h5v7h-5zM888 683h1v7h-1zM891 683h1v7h-1zM893 683h1v7h-1zM897 683h1v7h-1zM919 683h1v7h-1zM921 683h1v7h-1zM923 683h4v7h-4zM928 683h1v7h-1zM931 683h5v7h-5zM1012 683h1v7h-1z" fill="url(#ionh)"/><rect x="91" y="686" width="4" height="1" fill="#000"/><rect x="91" y="680" width="4" height="1" fill="#000"/><rect x="91" y="675" width="4" height="1" fill="#000"/><rect x="91" y="670" width="4" height="1" fill="#000"/><rect x="91" y="667" width="4" height="1" fill="#000"/><rect x="91" y="664" width="4" height="1" fill="#000"/><rect x="91" y="661" width="4" height="1" fill="#000"/><rect x="86" y="659" width="9" height="1" fill="#000"/><rect x="91" y="643" width="4" height="1" fill="#000"/><rect x="91" y="634" width="4" height="1" fill="#000"/><rect x="91" y="627" width="4" height="1" fill="#000"/><rect x="91" y="622" width="4" height="1" fill="#000"/><rect x="91" y="618" width="4" height="1" fill="#000"/><rect x="91" y="614" width="4" height="1" fill="#000"/><rect x="91" y="611" width="4" height="1" fill="#000"/><rect x="91" y="609" width="4" height="1" fill="#000"/><rect x="86" y="606" width="9" height="1" fill="#000"/><rect x="91" y="590" width="4" height="1" fill="#000"/><rect x="91" y="581" width="4" height="1" fill="#000"/><rect x="91" y="575" width="4" height="1" fill="#000"/><rect x="91" y="570" width="4" height="1" fill="#000"/><rect x="91" y="565" width="4" height="1" fill="#000"/><rect x="91" y="562" width="4" height="1" fill="#000"/><rect x="91" y="559" width="4" height="1" fill="#000"/><rect x="91" y="556" width="4" height="1" fill="#000"/><rect x="86" y="554" width="9" height="1" fill="#000"/><rect x="91" y="538" width="4" height="1" fill="#000"/><rect x="91" y="529" width="4" height="1" fill="#000"/><rect x="91" y="522" width="4" height="1" fill="#000"/><rect x="91" y="517" width="4" height="1" fill="#000"/><rect x="91" y="513" width="4" height="1" fill="#000"/><text x="8.8" y="538" font-size="13.5" textLength="74.1" lengthAdjust="spacingAndGlyphs" xml:space="preserve">LEMMS Ions</text><text x="58.8" y="562.8" font-size="13.5" textLength="15.6" lengthAdjust="spacingAndGlyphs" xml:space="preserve">10</text><text x="74.1" y="556.9" font-size="13.5" textLength="8.2" lengthAdjust="spacingAndGlyphs" xml:space="preserve">4</text><text x="58.8" y="614.8" font-size="13.5" textLength="15.6" lengthAdjust="spacingAndGlyphs" xml:space="preserve">10</text><text x="74.1" y="608.9" font-size="13.5" textLength="8.2" lengthAdjust="spacingAndGlyphs" xml:space="preserve">3</text><text x="58.8" y="667.8" font-size="13.5" textLength="15.6" lengthAdjust="spacingAndGlyphs" xml:space="preserve">10</text><text x="74.1" y="661.9" font-size="13.5" textLength="8.2" lengthAdjust="spacingAndGlyphs" xml:space="preserve">2</text><text transform="translate(49.2,640.9) rotate(-90)" x="0" y="0" font-size="13.5" textLength="77.8" lengthAdjust="spacingAndGlyphs" xml:space="preserve">Energy (keV)</text><rect x="95" y="695" width="986" height="16" fill="#000"/><rect x="96" y="696" width="984" height="14" fill="#00ff00"/><rect x="96" y="696" width="89" height="14" fill="#ff0000"/><rect x="202" y="696" width="12" height="14" fill="#ff0000"/><rect x="665" y="696" width="14" height="14" fill="#ff0000"/><text x="87.9" y="708.5" font-size="13.5" text-anchor="end" textLength="58.8" lengthAdjust="spacingAndGlyphs" xml:space="preserve">Sunlight?</text><rect x="136" y="711" width="1" height="4" fill="#000"/><rect x="177" y="711" width="1" height="4" fill="#000"/><rect x="218" y="711" width="1" height="9" fill="#000"/><rect x="259" y="711" width="1" height="4" fill="#000"/><rect x="300" y="711" width="1" height="4" fill="#000"/><rect x="341" y="711" width="1" height="9" fill="#000"/><rect x="382" y="711" width="1" height="4" fill="#000"/><rect x="423" y="711" width="1" height="4" fill="#000"/><rect x="464" y="711" width="1" height="9" fill="#000"/><rect x="505" y="711" width="1" height="4" fill="#000"/><rect x="546" y="711" width="1" height="4" fill="#000"/><rect x="587" y="711" width="1" height="9" fill="#000"/><rect x="628" y="711" width="1" height="4" fill="#000"/><rect x="669" y="711" width="1" height="4" fill="#000"/><rect x="710" y="711" width="1" height="9" fill="#000"/><rect x="751" y="711" width="1" height="4" fill="#000"/><rect x="792" y="711" width="1" height="4" fill="#000"/><rect x="833" y="711" width="1" height="9" fill="#000"/><rect x="874" y="711" width="1" height="4" fill="#000"/><rect x="915" y="711" width="1" height="4" fill="#000"/><rect x="956" y="711" width="1" height="9" fill="#000"/><rect x="997" y="711" width="1" height="4" fill="#000"/><rect x="1038" y="711" width="1" height="4" fill="#000"/><rect x="1080" y="711" width="1" height="9" fill="#000"/><text x="236.7" y="736" font-size="13.5" text-anchor="end" textLength="36.4" lengthAdjust="spacingAndGlyphs" xml:space="preserve">03:00</text><text x="236.7" y="752" font-size="13.5" text-anchor="end" textLength="36.4" lengthAdjust="spacingAndGlyphs" xml:space="preserve">23.84</text><text x="236.7" y="768" font-size="13.5" text-anchor="end" textLength="36.4" lengthAdjust="spacingAndGlyphs" xml:space="preserve">21.00</text><text x="236.7" y="784" font-size="13.5" text-anchor="end" textLength="36.4" lengthAdjust="spacingAndGlyphs" xml:space="preserve">28.61</text><text x="359.7" y="736" font-size="13.5" text-anchor="end" textLength="36.4" lengthAdjust="spacingAndGlyphs" xml:space="preserve">06:00</text><text x="359.7" y="752" font-size="13.5" text-anchor="end" textLength="36.4" lengthAdjust="spacingAndGlyphs" xml:space="preserve">23.87</text><text x="359.7" y="768" font-size="13.5" text-anchor="end" textLength="36.4" lengthAdjust="spacingAndGlyphs" xml:space="preserve">21.10</text><text x="359.7" y="784" font-size="13.5" text-anchor="end" textLength="36.4" lengthAdjust="spacingAndGlyphs" xml:space="preserve">29.20</text><text x="482.7" y="736" font-size="13.5" text-anchor="end" textLength="36.4" lengthAdjust="spacingAndGlyphs" xml:space="preserve">09:00</text><text x="482.7" y="752" font-size="13.5" text-anchor="end" textLength="36.4" lengthAdjust="spacingAndGlyphs" xml:space="preserve">23.90</text><text x="482.7" y="768" font-size="13.5" text-anchor="end" textLength="36.4" lengthAdjust="spacingAndGlyphs" xml:space="preserve">21.16</text><text x="482.7" y="784" font-size="13.5" text-anchor="end" textLength="36.4" lengthAdjust="spacingAndGlyphs" xml:space="preserve">29.74</text><text x="605.7" y="736" font-size="13.5" text-anchor="end" textLength="36.4" lengthAdjust="spacingAndGlyphs" xml:space="preserve">12:00</text><text x="605.7" y="752" font-size="13.5" text-anchor="end" textLength="36.4" lengthAdjust="spacingAndGlyphs" xml:space="preserve">23.93</text><text x="605.7" y="768" font-size="13.5" text-anchor="end" textLength="36.4" lengthAdjust="spacingAndGlyphs" xml:space="preserve">21.17</text><text x="605.7" y="784" font-size="13.5" text-anchor="end" textLength="36.4" lengthAdjust="spacingAndGlyphs" xml:space="preserve">30.25</text><text x="728.7" y="736" font-size="13.5" text-anchor="end" textLength="36.4" lengthAdjust="spacingAndGlyphs" xml:space="preserve">15:00</text><text x="728.7" y="752" font-size="13.5" text-anchor="end" textLength="36.4" lengthAdjust="spacingAndGlyphs" xml:space="preserve">23.96</text><text x="728.7" y="768" font-size="13.5" text-anchor="end" textLength="36.4" lengthAdjust="spacingAndGlyphs" xml:space="preserve">21.15</text><text x="728.7" y="784" font-size="13.5" text-anchor="end" textLength="36.4" lengthAdjust="spacingAndGlyphs" xml:space="preserve">30.72</text><text x="851.7" y="736" font-size="13.5" text-anchor="end" textLength="36.4" lengthAdjust="spacingAndGlyphs" xml:space="preserve">18:00</text><text x="851.7" y="752" font-size="13.5" text-anchor="end" textLength="36.4" lengthAdjust="spacingAndGlyphs" xml:space="preserve">23.99</text><text x="851.7" y="768" font-size="13.5" text-anchor="end" textLength="36.4" lengthAdjust="spacingAndGlyphs" xml:space="preserve">21.09</text><text x="851.7" y="784" font-size="13.5" text-anchor="end" textLength="36.4" lengthAdjust="spacingAndGlyphs" xml:space="preserve">31.14</text><text x="974.7" y="736" font-size="13.5" text-anchor="end" textLength="36.4" lengthAdjust="spacingAndGlyphs" xml:space="preserve">21:00</text><text x="974.7" y="752" font-size="13.5" text-anchor="end" textLength="29.3" lengthAdjust="spacingAndGlyphs" xml:space="preserve">0.03</text><text x="974.7" y="768" font-size="13.5" text-anchor="end" textLength="36.4" lengthAdjust="spacingAndGlyphs" xml:space="preserve">20.98</text><text x="974.7" y="784" font-size="13.5" text-anchor="end" textLength="36.4" lengthAdjust="spacingAndGlyphs" xml:space="preserve">31.53</text><text x="1098.7" y="736" font-size="13.5" text-anchor="end" textLength="36.4" lengthAdjust="spacingAndGlyphs" xml:space="preserve">00:00</text><text x="1098.7" y="752" font-size="13.5" text-anchor="end" textLength="29.3" lengthAdjust="spacingAndGlyphs" xml:space="preserve">0.06</text><text x="1098.7" y="768" font-size="13.5" text-anchor="end" textLength="36.4" lengthAdjust="spacingAndGlyphs" xml:space="preserve">20.83</text><text x="1098.7" y="784" font-size="13.5" text-anchor="end" textLength="36.4" lengthAdjust="spacingAndGlyphs" xml:space="preserve">31.88</text><text x="60.9" y="750.8" font-size="13.5" text-anchor="end" textLength="48.3" lengthAdjust="spacingAndGlyphs" xml:space="preserve">LT (hrs)</text><text x="59.9" y="766.8" font-size="13.5" text-anchor="end" textLength="15.3" lengthAdjust="spacingAndGlyphs" xml:space="preserve">Rs</text><text x="60.9" y="782.8" font-size="13.5" text-anchor="end" textLength="53.3" lengthAdjust="spacingAndGlyphs" xml:space="preserve">Dipole L</text><rect x="1093" y="30" width="13" height="191" fill="url(#cmap)"/><rect x="1106" y="29" width="1" height="192" fill="#000"/><rect x="1107" y="29" width="9" height="1" fill="#000"/><rect x="1107" y="87" width="9" height="1" fill="#000"/><rect x="1107" y="144" width="9" height="1" fill="#000"/><rect x="1107" y="202" width="9" height="1" fill="#000"/><rect x="1107" y="219" width="4" height="1" fill="#000"/><rect x="1107" y="215" width="4" height="1" fill="#000"/><rect x="1107" y="211" width="4" height="1" fill="#000"/><rect x="1107" y="207" width="4" height="1" fill="#000"/><rect x="1107" y="205" width="4" height="1" fill="#000"/><rect x="1107" y="185" width="4" height="1" fill="#000"/><rect x="1107" y="174" width="4" height="1" fill="#000"/><rect x="1107" y="167" width="4" height="1" fill="#000"/><rect x="1107" y="162" width="4" height="1" fill="#000"/><rect x="1107" y="157" width="4" height="1" fill="#000"/><rect x="1107" y="153" width="4" height="1" fill="#000"/><rect x="1107" y="150" width="4" height="1" fill="#000"/><rect x="1107" y="147" width="4" height="1" fill="#000"/><rect x="1107" y="127" width="4" height="1" fill="#000"/><rect x="1107" y="117" width="4" height="1" fill="#000"/><rect x="1107" y="110" width="4" height="1" fill="#000"/><rect x="1107" y="104" width="4" height="1" fill="#000"/><rect x="1107" y="99" width="4" height="1" fill="#000"/><rect x="1107" y="96" width="4" height="1" fill="#000"/><rect x="1107" y="92" width="4" height="1" fill="#000"/><rect x="1107" y="89" width="4" height="1" fill="#000"/><rect x="1107" y="69" width="4" height="1" fill="#000"/><rect x="1107" y="59" width="4" height="1" fill="#000"/><rect x="1107" y="52" width="4" height="1" fill="#000"/><rect x="1107" y="46" width="4" height="1" fill="#000"/><rect x="1107" y="42" width="4" height="1" fill="#000"/><rect x="1107" y="38" width="4" height="1" fill="#000"/><rect x="1107" y="35" width="4" height="1" fill="#000"/><rect x="1107" y="32" width="4" height="1" fill="#000"/><rect x="1093" y="220" width="18" height="1" fill="#000"/><rect x="1093" y="226" width="13" height="191" fill="url(#cmap)"/><rect x="1106" y="225" width="1" height="192" fill="#000"/><rect x="1107" y="225" width="9" height="1" fill="#000"/><rect x="1107" y="282" width="9" height="1" fill="#000"/><rect x="1107" y="340" width="9" height="1" fill="#000"/><rect x="1107" y="397" width="9" height="1" fill="#000"/><rect x="1107" y="415" width="4" height="1" fill="#000"/><rect x="1107" y="410" width="4" height="1" fill="#000"/><rect x="1107" y="406" width="4" height="1" fill="#000"/><rect x="1107" y="403" width="4" height="1" fill="#000"/><rect x="1107" y="400" width="4" height="1" fill="#000"/><rect x="1107" y="380" width="4" height="1" fill="#000"/><rect x="1107" y="370" width="4" height="1" fill="#000"/><rect x="1107" y="363" width="4" height="1" fill="#000"/><rect x="1107" y="357" width="4" height="1" fill="#000"/><rect x="1107" y="353" width="4" height="1" fill="#000"/><rect x="1107" y="349" width="4" height="1" fill="#000"/><rect x="1107" y="345" width="4" height="1" fill="#000"/><rect x="1107" y="342" width="4" height="1" fill="#000"/><rect x="1107" y="322" width="4" height="1" fill="#000"/><rect x="1107" y="312" width="4" height="1" fill="#000"/><rect x="1107" y="305" width="4" height="1" fill="#000"/><rect x="1107" y="300" width="4" height="1" fill="#000"/><rect x="1107" y="295" width="4" height="1" fill="#000"/><rect x="1107" y="291" width="4" height="1" fill="#000"/><rect x="1107" y="288" width="4" height="1" fill="#000"/><rect x="1107" y="285" width="4" height="1" fill="#000"/><rect x="1107" y="265" width="4" height="1" fill="#000"/><rect x="1107" y="255" width="4" height="1" fill="#000"/><rect x="1107" y="248" width="4" height="1" fill="#000"/><rect x="1107" y="242" width="4" height="1" fill="#000"/><rect x="1107" y="238" width="4" height="1" fill="#000"/><rect x="1107" y="234" width="4" height="1" fill="#000"/><rect x="1107" y="230" width="4" height="1" fill="#000"/><rect x="1107" y="227" width="4" height="1" fill="#000"/><rect x="1093" y="416" width="18" height="1" fill="#000"/><rect x="1093" y="515" width="13" height="177" fill="url(#cmap)"/><rect x="1106" y="514" width="1" height="178" fill="#000"/><rect x="1107" y="515" width="9" height="1" fill="#000"/><rect x="1107" y="554" width="9" height="1" fill="#000"/><rect x="1107" y="593" width="9" height="1" fill="#000"/><rect x="1107" y="632" width="9" height="1" fill="#000"/><rect x="1107" y="671" width="9" height="1" fill="#000"/><rect x="1107" y="534" width="4" height="1" fill="#000"/><rect x="1107" y="573" width="4" height="1" fill="#000"/><rect x="1107" y="612" width="4" height="1" fill="#000"/><rect x="1107" y="652" width="4" height="1" fill="#000"/><rect x="1107" y="691" width="4" height="1" fill="#000"/><rect x="1093" y="691" width="18" height="1" fill="#000"/><text x="1119.85" y="37.8" font-size="13.5" textLength="15.6" lengthAdjust="spacingAndGlyphs" xml:space="preserve">10</text><text x="1135.15" y="31.9" font-size="13.5" textLength="7.4" lengthAdjust="spacingAndGlyphs" xml:space="preserve">−</text><text x="1143.15" y="31.9" font-size="13.5" textLength="8.2" lengthAdjust="spacingAndGlyphs" xml:space="preserve">9</text><text x="1119.85" y="95.8" font-size="13.5" textLength="15.6" lengthAdjust="spacingAndGlyphs" xml:space="preserve">10</text><text x="1135.15" y="89.9" font-size="13.5" textLength="7.4" lengthAdjust="spacingAndGlyphs" xml:space="preserve">−</text><text x="1143.15" y="89.9" font-size="13.5" textLength="15.4" lengthAdjust="spacingAndGlyphs" xml:space="preserve">10</text><text x="1119.85" y="152.8" font-size="13.5" textLength="15.6" lengthAdjust="spacingAndGlyphs" xml:space="preserve">10</text><text x="1135.15" y="146.9" font-size="13.5" textLength="7.4" lengthAdjust="spacingAndGlyphs" xml:space="preserve">−</text><text x="1143.15" y="146.9" font-size="13.5" textLength="15.4" lengthAdjust="spacingAndGlyphs" xml:space="preserve">11</text><text x="1119.85" y="210.8" font-size="13.5" textLength="15.6" lengthAdjust="spacingAndGlyphs" xml:space="preserve">10</text><text x="1135.15" y="204.9" font-size="13.5" textLength="7.4" lengthAdjust="spacingAndGlyphs" xml:space="preserve">−</text><text x="1143.15" y="204.9" font-size="13.5" textLength="15.4" lengthAdjust="spacingAndGlyphs" xml:space="preserve">12</text><text x="1119.85" y="233.8" font-size="13.5" textLength="15.6" lengthAdjust="spacingAndGlyphs" xml:space="preserve">10</text><text x="1135.15" y="227.9" font-size="13.5" textLength="7.4" lengthAdjust="spacingAndGlyphs" xml:space="preserve">−</text><text x="1143.15" y="227.9" font-size="13.5" textLength="8.2" lengthAdjust="spacingAndGlyphs" xml:space="preserve">9</text><text x="1119.85" y="290.8" font-size="13.5" textLength="15.6" lengthAdjust="spacingAndGlyphs" xml:space="preserve">10</text><text x="1135.15" y="284.9" font-size="13.5" textLength="7.4" lengthAdjust="spacingAndGlyphs" xml:space="preserve">−</text><text x="1143.15" y="284.9" font-size="13.5" textLength="15.4" lengthAdjust="spacingAndGlyphs" xml:space="preserve">10</text><text x="1119.85" y="348.8" font-size="13.5" textLength="15.6" lengthAdjust="spacingAndGlyphs" xml:space="preserve">10</text><text x="1135.15" y="342.9" font-size="13.5" textLength="7.4" lengthAdjust="spacingAndGlyphs" xml:space="preserve">−</text><text x="1143.15" y="342.9" font-size="13.5" textLength="15.4" lengthAdjust="spacingAndGlyphs" xml:space="preserve">11</text><text x="1119.85" y="405.8" font-size="13.5" textLength="15.6" lengthAdjust="spacingAndGlyphs" xml:space="preserve">10</text><text x="1135.15" y="399.9" font-size="13.5" textLength="7.4" lengthAdjust="spacingAndGlyphs" xml:space="preserve">−</text><text x="1143.15" y="399.9" font-size="13.5" textLength="15.4" lengthAdjust="spacingAndGlyphs" xml:space="preserve">12</text><text x="1119.8" y="523.8" font-size="13.5" textLength="15.6" lengthAdjust="spacingAndGlyphs" xml:space="preserve">10</text><text x="1135.1" y="517.9" font-size="13.5" textLength="8.2" lengthAdjust="spacingAndGlyphs" xml:space="preserve">4</text><text x="1119.8" y="562.8" font-size="13.5" textLength="15.6" lengthAdjust="spacingAndGlyphs" xml:space="preserve">10</text><text x="1135.1" y="556.9" font-size="13.5" textLength="8.2" lengthAdjust="spacingAndGlyphs" xml:space="preserve">2</text><text x="1119.8" y="601.8" font-size="13.5" textLength="15.6" lengthAdjust="spacingAndGlyphs" xml:space="preserve">10</text><text x="1135.1" y="595.9" font-size="13.5" textLength="8.2" lengthAdjust="spacingAndGlyphs" xml:space="preserve">0</text><text x="1119.8" y="640.8" font-size="13.5" textLength="15.6" lengthAdjust="spacingAndGlyphs" xml:space="preserve">10</text><text x="1135.1" y="634.9" font-size="13.5" textLength="7.4" lengthAdjust="spacingAndGlyphs" xml:space="preserve">−</text><text x="1143.1" y="634.9" font-size="13.5" textLength="8.2" lengthAdjust="spacingAndGlyphs" xml:space="preserve">2</text><text x="1119.8" y="679.8" font-size="13.5" textLength="15.6" lengthAdjust="spacingAndGlyphs" xml:space="preserve">10</text><text x="1135.1" y="673.9" font-size="13.5" textLength="7.4" lengthAdjust="spacingAndGlyphs" xml:space="preserve">−</text><text x="1143.1" y="673.9" font-size="13.5" textLength="8.2" lengthAdjust="spacingAndGlyphs" xml:space="preserve">4</text><text transform="translate(1167.6,58.85) rotate(90)" x="0" y="0" font-size="13.5" textLength="130" lengthAdjust="spacingAndGlyphs" xml:space="preserve">pressure dyne/cm^2</text><text transform="translate(1167.6,254.6) rotate(90)" x="0" y="0" font-size="13.5" textLength="130" lengthAdjust="spacingAndGlyphs" xml:space="preserve">pressure dyne/cm^2</text><text transform="translate(1159.7,510.8) rotate(90)" x="0" y="0" font-size="13.5" textLength="182.8" lengthAdjust="spacingAndGlyphs" xml:space="preserve">intensity 1/(s cm^2 ster keV)</text><rect x="215" y="802" width="152" height="1" fill="#000"/><rect x="215" y="950" width="152" height="1" fill="#000"/><rect x="215" y="802" width="1" height="149" fill="#000"/><rect x="366" y="802" width="1" height="149" fill="#000"/><rect x="206" y="803" width="9" height="1" fill="#000"/><rect x="211" y="804" width="4" height="1" fill="#000"/><rect x="211" y="806" width="4" height="1" fill="#000"/><rect x="211" y="808" width="4" height="1" fill="#000"/><rect x="211" y="810" width="4" height="1" fill="#000"/><rect x="211" y="812" width="4" height="1" fill="#000"/><rect x="211" y="814" width="4" height="1" fill="#000"/><rect x="211" y="815" width="4" height="1" fill="#000"/><rect x="211" y="817" width="4" height="1" fill="#000"/><rect x="211" y="819" width="4" height="1" fill="#000"/><rect x="206" y="821" width="9" height="1" fill="#000"/><rect x="211" y="823" width="4" height="1" fill="#000"/><rect x="211" y="825" width="4" height="1" fill="#000"/><rect x="211" y="826" width="4" height="1" fill="#000"/><rect x="211" y="828" width="4" height="1" fill="#000"/><rect x="211" y="830" width="4" height="1" fill="#000"/><rect x="211" y="832" width="4" height="1" fill="#000"/><rect x="211" y="834" width="4" height="1" fill="#000"/><rect x="211" y="836" width="4" height="1" fill="#000"/><rect x="211" y="837" width="4" height="1" fill="#000"/><rect x="206" y="839" width="9" height="1" fill="#000"/><rect x="211" y="841" width="4" height="1" fill="#000"/><rect x="211" y="843" width="4" height="1" fill="#000"/><rect x="211" y="845" width="4" height="1" fill="#000"/><rect x="211" y="847" width="4" height="1" fill="#000"/><rect x="211" y="848" width="4" height="1" fill="#000"/><rect x="211" y="850" width="4" height="1" fill="#000"/><rect x="211" y="852" width="4" height="1" fill="#000"/><rect x="211" y="854" width="4" height="1" fill="#000"/><rect x="211" y="856" width="4" height="1" fill="#000"/><rect x="206" y="858" width="9" height="1" fill="#000"/><rect x="211" y="859" width="4" height="1" fill="#000"/><rect x="211" y="861" width="4" height="1" fill="#000"/><rect x="211" y="863" width="4" height="1" fill="#000"/><rect x="211" y="865" width="4" height="1" fill="#000"/><rect x="211" y="867" width="4" height="1" fill="#000"/><rect x="211" y="869" width="4" height="1" fill="#000"/><rect x="211" y="870" width="4" height="1" fill="#000"/><rect x="211" y="872" width="4" height="1" fill="#000"/><rect x="211" y="874" width="4" height="1" fill="#000"/><rect x="206" y="876" width="9" height="1" fill="#000"/><rect x="211" y="878" width="4" height="1" fill="#000"/><rect x="211" y="880" width="4" height="1" fill="#000"/><rect x="211" y="882" width="4" height="1" fill="#000"/><rect x="211" y="883" width="4" height="1" fill="#000"/><rect x="211" y="885" width="4" height="1" fill="#000"/><rect x="211" y="887" width="4" height="1" fill="#000"/><rect x="211" y="889" width="4" height="1" fill="#000"/><rect x="211" y="891" width="4" height="1" fill="#000"/><rect x="211" y="893" width="4" height="1" fill="#000"/><rect x="206" y="894" width="9" height="1" fill="#000"/><rect x="211" y="896" width="4" height="1" fill="#000"/><rect x="211" y="898" width="4" height="1" fill="#000"/><rect x="211" y="900" width="4" height="1" fill="#000"/><rect x="211" y="902" width="4" height="1" fill="#000"/><rect x="211" y="904" width="4" height="1" fill="#000"/><rect x="211" y="905" width="4" height="1" fill="#000"/><rect x="211" y="907" width="4" height="1" fill="#000"/><rect x="211" y="909" width="4" height="1" fill="#000"/><rect x="211" y="911" width="4" height="1" fill="#000"/><rect x="206" y="913" width="9" height="1" fill="#000"/><rect x="211" y="915" width="4" height="1" fill="#000"/><rect x="211" y="916" width="4" height="1" fill="#000"/><rect x="211" y="918" width="4" height="1" fill="#000"/><rect x="211" y="920" width="4" height="1" fill="#000"/><rect x="211" y="922" width="4" height="1" fill="#000"/><rect x="211" y="924" width="4" height="1" fill="#000"/><rect x="211" y="926" width="4" height="1" fill="#000"/><rect x="211" y="927" width="4" height="1" fill="#000"/><rect x="211" y="929" width="4" height="1" fill="#000"/><rect x="206" y="931" width="9" height="1" fill="#000"/><rect x="211" y="933" width="4" height="1" fill="#000"/><rect x="211" y="935" width="4" height="1" fill="#000"/><rect x="211" y="937" width="4" height="1" fill="#000"/><rect x="211" y="938" width="4" height="1" fill="#000"/><rect x="211" y="940" width="4" height="1" fill="#000"/><rect x="211" y="942" width="4" height="1" fill="#000"/><rect x="211" y="944" width="4" height="1" fill="#000"/><rect x="211" y="946" width="4" height="1" fill="#000"/><rect x="211" y="948" width="4" height="1" fill="#000"/><rect x="206" y="950" width="9" height="1" fill="#000"/><rect x="216" y="951" width="1" height="9" fill="#000"/><rect x="235" y="951" width="1" height="4" fill="#000"/><rect x="254" y="951" width="1" height="9" fill="#000"/><rect x="272" y="951" width="1" height="4" fill="#000"/><rect x="291" y="951" width="1" height="9" fill="#000"/><rect x="310" y="951" width="1" height="4" fill="#000"/><rect x="328" y="951" width="1" height="9" fill="#000"/><rect x="347" y="951" width="1" height="4" fill="#000"/><rect x="366" y="951" width="1" height="9" fill="#000"/><text x="202.4" y="808" font-size="13.5" text-anchor="end" textLength="28.5" lengthAdjust="spacingAndGlyphs" xml:space="preserve">−40.</text><text x="202.4" y="826.375" font-size="13.5" text-anchor="end" textLength="28.5" lengthAdjust="spacingAndGlyphs" xml:space="preserve">−30.</text><text x="202.4" y="844.75" font-size="13.5" text-anchor="end" textLength="28.5" lengthAdjust="spacingAndGlyphs" xml:space="preserve">−20.</text><text x="202.4" y="863.125" font-size="13.5" text-anchor="end" textLength="28.5" lengthAdjust="spacingAndGlyphs" xml:space="preserve">−10.</text><text x="202.4" y="881.5" font-size="13.5" text-anchor="end" textLength="12.5" lengthAdjust="spacingAndGlyphs" xml:space="preserve">0.</text><text x="202.4" y="899.875" font-size="13.5" text-anchor="end" textLength="20.5" lengthAdjust="spacingAndGlyphs" xml:space="preserve">10.</text><text x="202.4" y="918.25" font-size="13.5" text-anchor="end" textLength="20.5" lengthAdjust="spacingAndGlyphs" xml:space="preserve">20.</text><text x="202.4" y="936.625" font-size="13.5" text-anchor="end" textLength="20.5" lengthAdjust="spacingAndGlyphs" xml:space="preserve">30.</text><text x="202.4" y="955" font-size="13.5" text-anchor="end" textLength="20.5" lengthAdjust="spacingAndGlyphs" xml:space="preserve">40.</text><text x="215.7" y="976.2" font-size="13.5" text-anchor="middle" textLength="21" lengthAdjust="spacingAndGlyphs" xml:space="preserve">40.</text><text x="253.2" y="976.2" font-size="13.5" text-anchor="middle" textLength="21" lengthAdjust="spacingAndGlyphs" xml:space="preserve">20.</text><text x="290.7" y="976.2" font-size="13.5" text-anchor="middle" textLength="13.4" lengthAdjust="spacingAndGlyphs" xml:space="preserve">0.</text><text x="328.2" y="976.2" font-size="13.5" text-anchor="middle" textLength="28.7" lengthAdjust="spacingAndGlyphs" xml:space="preserve">−20.</text><text x="365.7" y="976.2" font-size="13.5" text-anchor="middle" textLength="28.7" lengthAdjust="spacingAndGlyphs" xml:space="preserve">−40.</text><text x="291.3" y="994.6" font-size="13.5" text-anchor="middle" textLength="43" lengthAdjust="spacingAndGlyphs" xml:space="preserve">KSM−X</text><text transform="translate(165.2,897.7) rotate(-90)" x="0" y="0" font-size="13.5" textLength="43.4" lengthAdjust="spacingAndGlyphs" xml:space="preserve">KSM−Y</text><path d="M248.50,802.50 L247.67,803.83 L246.55,805.59 L245.22,807.67 L243.75,810.00 L242.22,812.49 L240.70,815.04 L239.26,817.57 L238.00,820.00 L236.85,822.39 L235.72,824.87 L234.63,827.40 L233.58,829.97 L232.58,832.54 L231.64,835.08 L230.78,837.58 L230.00,840.00 L229.31,842.34 L228.71,844.63 L228.18,846.88 L227.72,849.11 L227.31,851.32 L226.94,853.53 L226.61,855.75 L226.30,858.00 L226.02,860.27 L225.79,862.55 L225.60,864.84 L225.45,867.13 L225.34,869.42 L225.26,871.72 L225.21,874.01 L225.20,876.30 L225.21,878.59 L225.26,880.88 L225.34,883.18 L225.45,885.47 L225.60,887.76 L225.79,890.05 L226.02,892.33 L226.30,894.60 L226.61,896.85 L226.94,899.07 L227.31,901.28 L227.72,903.49 L228.18,905.72 L228.71,907.97 L229.31,910.26 L230.00,912.60 L230.78,915.02 L231.64,917.52 L232.58,920.06 L233.57,922.63 L234.63,925.20 L235.72,927.73 L236.85,930.21 L238.00,932.60 L239.26,935.03 L240.70,937.56 L242.22,940.11 L243.75,942.60 L245.22,944.93 L246.55,947.01 L247.67,948.77 L248.50,950.10" fill="none" stroke="#0000ff" stroke-width="1.35" shape-rendering="auto" stroke-dasharray="2.4 1.2"/><path d="M284.00,802.50 L282.59,803.83 L280.70,805.59 L278.44,807.67 L275.94,810.00 L273.32,812.49 L270.71,815.04 L268.23,817.57 L266.00,820.00 L263.93,822.39 L261.85,824.87 L259.80,827.40 L257.81,829.97 L255.91,832.54 L254.12,835.08 L252.47,837.58 L251.00,840.00 L249.71,842.34 L248.56,844.63 L247.56,846.88 L246.67,849.11 L245.89,851.32 L245.19,853.53 L244.57,855.75 L244.00,858.00 L243.51,860.27 L243.12,862.55 L242.82,864.84 L242.61,867.13 L242.46,869.42 L242.36,871.72 L242.31,874.01 L242.30,876.30 L242.31,878.59 L242.36,880.88 L242.46,883.18 L242.61,885.47 L242.82,887.76 L243.12,890.05 L243.51,892.33 L244.00,894.60 L244.57,896.85 L245.19,899.07 L245.89,901.28 L246.67,903.49 L247.56,905.72 L248.56,907.97 L249.71,910.26 L251.00,912.60 L252.47,915.02 L254.12,917.52 L255.91,920.06 L257.81,922.63 L259.80,925.20 L261.85,927.73 L263.93,930.21 L266.00,932.60 L268.23,935.03 L270.71,937.56 L273.32,940.11 L275.94,942.60 L278.44,944.93 L280.70,947.01 L282.59,948.77 L284.00,950.10" fill="none" stroke="#7a3c10" stroke-width="1.35" shape-rendering="auto" stroke-dasharray="2.4 1.2"/><rect x="509" y="802" width="152" height="1" fill="#000"/><rect x="509" y="950" width="152" height="1" fill="#000"/><rect x="509" y="802" width="1" height="149" fill="#000"/><rect x="660" y="802" width="1" height="149" fill="#000"/><rect x="500" y="803" width="9" height="1" fill="#000"/><rect x="505" y="804" width="4" height="1" fill="#000"/><rect x="505" y="806" width="4" height="1" fill="#000"/><rect x="505" y="808" width="4" height="1" fill="#000"/><rect x="505" y="810" width="4" height="1" fill="#000"/><rect x="505" y="812" width="4" height="1" fill="#000"/><rect x="505" y="814" width="4" height="1" fill="#000"/><rect x="505" y="815" width="4" height="1" fill="#000"/><rect x="505" y="817" width="4" height="1" fill="#000"/><rect x="505" y="819" width="4" height="1" fill="#000"/><rect x="500" y="821" width="9" height="1" fill="#000"/><rect x="505" y="823" width="4" height="1" fill="#000"/><rect x="505" y="825" width="4" height="1" fill="#000"/><rect x="505" y="826" width="4" height="1" fill="#000"/><rect x="505" y="828" width="4" height="1" fill="#000"/><rect x="505" y="830" width="4" height="1" fill="#000"/><rect x="505" y="832" width="4" height="1" fill="#000"/><rect x="505" y="834" width="4" height="1" fill="#000"/><rect x="505" y="836" width="4" height="1" fill="#000"/><rect x="505" y="837" width="4" height="1" fill="#000"/><rect x="500" y="839" width="9" height="1" fill="#000"/><rect x="505" y="841" width="4" height="1" fill="#000"/><rect x="505" y="843" width="4" height="1" fill="#000"/><rect x="505" y="845" width="4" height="1" fill="#000"/><rect x="505" y="847" width="4" height="1" fill="#000"/><rect x="505" y="848" width="4" height="1" fill="#000"/><rect x="505" y="850" width="4" height="1" fill="#000"/><rect x="505" y="852" width="4" height="1" fill="#000"/><rect x="505" y="854" width="4" height="1" fill="#000"/><rect x="505" y="856" width="4" height="1" fill="#000"/><rect x="500" y="858" width="9" height="1" fill="#000"/><rect x="505" y="859" width="4" height="1" fill="#000"/><rect x="505" y="861" width="4" height="1" fill="#000"/><rect x="505" y="863" width="4" height="1" fill="#000"/><rect x="505" y="865" width="4" height="1" fill="#000"/><rect x="505" y="867" width="4" height="1" fill="#000"/><rect x="505" y="869" width="4" height="1" fill="#000"/><rect x="505" y="870" width="4" height="1" fill="#000"/><rect x="505" y="872" width="4" height="1" fill="#000"/><rect x="505" y="874" width="4" height="1" fill="#000"/><rect x="500" y="876" width="9" height="1" fill="#000"/><rect x="505" y="878" width="4" height="1" fill="#000"/><rect x="505" y="880" width="4" height="1" fill="#000"/><rect x="505" y="882" width="4" height="1" fill="#000"/><rect x="505" y="883" width="4" height="1" fill="#000"/><rect x="505" y="885" width="4" height="1" fill="#000"/><rect x="505" y="887" width="4" height="1" fill="#000"/><rect x="505" y="889" width="4" height="1" fill="#000"/><rect x="505" y="891" width="4" height="1" fill="#000"/><rect x="505" y="893" width="4" height="1" fill="#000"/><rect x="500" y="894" width="9" height="1" fill="#000"/><rect x="505" y="896" width="4" height="1" fill="#000"/><rect x="505" y="898" width="4" height="1" fill="#000"/><rect x="505" y="900" width="4" height="1" fill="#000"/><rect x="505" y="902" width="4" height="1" fill="#000"/><rect x="505" y="904" width="4" height="1" fill="#000"/><rect x="505" y="905" width="4" height="1" fill="#000"/><rect x="505" y="907" width="4" height="1" fill="#000"/><rect x="505" y="909" width="4" height="1" fill="#000"/><rect x="505" y="911" width="4" height="1" fill="#000"/><rect x="500" y="913" width="9" height="1" fill="#000"/><rect x="505" y="915" width="4" height="1" fill="#000"/><rect x="505" y="916" width="4" height="1" fill="#000"/><rect x="505" y="918" width="4" height="1" fill="#000"/><rect x="505" y="920" width="4" height="1" fill="#000"/><rect x="505" y="922" width="4" height="1" fill="#000"/><rect x="505" y="924" width="4" height="1" fill="#000"/><rect x="505" y="926" width="4" height="1" fill="#000"/><rect x="505" y="927" width="4" height="1" fill="#000"/><rect x="505" y="929" width="4" height="1" fill="#000"/><rect x="500" y="931" width="9" height="1" fill="#000"/><rect x="505" y="933" width="4" height="1" fill="#000"/><rect x="505" y="935" width="4" height="1" fill="#000"/><rect x="505" y="937" width="4" height="1" fill="#000"/><rect x="505" y="938" width="4" height="1" fill="#000"/><rect x="505" y="940" width="4" height="1" fill="#000"/><rect x="505" y="942" width="4" height="1" fill="#000"/><rect x="505" y="944" width="4" height="1" fill="#000"/><rect x="505" y="946" width="4" height="1" fill="#000"/><rect x="505" y="948" width="4" height="1" fill="#000"/><rect x="500" y="950" width="9" height="1" fill="#000"/><rect x="510" y="951" width="1" height="9" fill="#000"/><rect x="529" y="951" width="1" height="4" fill="#000"/><rect x="548" y="951" width="1" height="9" fill="#000"/><rect x="566" y="951" width="1" height="4" fill="#000"/><rect x="585" y="951" width="1" height="9" fill="#000"/><rect x="604" y="951" width="1" height="4" fill="#000"/><rect x="622" y="951" width="1" height="9" fill="#000"/><rect x="641" y="951" width="1" height="4" fill="#000"/><rect x="660" y="951" width="1" height="9" fill="#000"/><text x="496.4" y="808" font-size="13.5" text-anchor="end" textLength="20.5" lengthAdjust="spacingAndGlyphs" xml:space="preserve">40.</text><text x="496.4" y="826.375" font-size="13.5" text-anchor="end" textLength="20.5" lengthAdjust="spacingAndGlyphs" xml:space="preserve">30.</text><text x="496.4" y="844.75" font-size="13.5" text-anchor="end" textLength="20.5" lengthAdjust="spacingAndGlyphs" xml:space="preserve">20.</text><text x="496.4" y="863.125" font-size="13.5" text-anchor="end" textLength="20.5" lengthAdjust="spacingAndGlyphs" xml:space="preserve">10.</text><text x="496.4" y="881.5" font-size="13.5" text-anchor="end" textLength="12.5" lengthAdjust="spacingAndGlyphs" xml:space="preserve">0.</text><text x="496.4" y="899.875" font-size="13.5" text-anchor="end" textLength="28.5" lengthAdjust="spacingAndGlyphs" xml:space="preserve">−10.</text><text x="496.4" y="918.25" font-size="13.5" text-anchor="end" textLength="28.5" lengthAdjust="spacingAndGlyphs" xml:space="preserve">−20.</text><text x="496.4" y="936.625" font-size="13.5" text-anchor="end" textLength="28.5" lengthAdjust="spacingAndGlyphs" xml:space="preserve">−30.</text><text x="496.4" y="955" font-size="13.5" text-anchor="end" textLength="28.5" lengthAdjust="spacingAndGlyphs" xml:space="preserve">−40.</text><text x="509.7" y="976.2" font-size="13.5" text-anchor="middle" textLength="21" lengthAdjust="spacingAndGlyphs" xml:space="preserve">40.</text><text x="547.2" y="976.2" font-size="13.5" text-anchor="middle" textLength="21" lengthAdjust="spacingAndGlyphs" xml:space="preserve">20.</text><text x="584.7" y="976.2" font-size="13.5" text-anchor="middle" textLength="13.4" lengthAdjust="spacingAndGlyphs" xml:space="preserve">0.</text><text x="622.2" y="976.2" font-size="13.5" text-anchor="middle" textLength="28.7" lengthAdjust="spacingAndGlyphs" xml:space="preserve">−20.</text><text x="659.7" y="976.2" font-size="13.5" text-anchor="middle" textLength="28.7" lengthAdjust="spacingAndGlyphs" xml:space="preserve">−40.</text><text x="585.3" y="994.6" font-size="13.5" text-anchor="middle" textLength="43" lengthAdjust="spacingAndGlyphs" xml:space="preserve">KSM−X</text><text transform="translate(459.2,897.7) rotate(-90)" x="0" y="0" font-size="13.5" textLength="43.4" lengthAdjust="spacingAndGlyphs" xml:space="preserve">KSM−Z</text><path d="M542.50,802.50 L541.67,803.83 L540.55,805.59 L539.22,807.67 L537.75,810.00 L536.22,812.49 L534.70,815.04 L533.26,817.57 L532.00,820.00 L530.85,822.39 L529.72,824.87 L528.63,827.40 L527.57,829.97 L526.58,832.54 L525.64,835.08 L524.78,837.58 L524.00,840.00 L523.31,842.34 L522.71,844.63 L522.18,846.88 L521.72,849.11 L521.31,851.32 L520.94,853.53 L520.61,855.75 L520.30,858.00 L520.02,860.27 L519.79,862.55 L519.60,864.84 L519.45,867.13 L519.34,869.42 L519.26,871.72 L519.21,874.01 L519.20,876.30 L519.21,878.59 L519.26,880.88 L519.34,883.18 L519.45,885.47 L519.60,887.76 L519.79,890.05 L520.02,892.33 L520.30,894.60 L520.61,896.85 L520.94,899.07 L521.31,901.28 L521.72,903.49 L522.18,905.72 L522.71,907.97 L523.31,910.26 L524.00,912.60 L524.78,915.02 L525.64,917.52 L526.58,920.06 L527.58,922.63 L528.63,925.20 L529.72,927.73 L530.85,930.21 L532.00,932.60 L533.26,935.03 L534.70,937.56 L536.22,940.11 L537.75,942.60 L539.22,944.93 L540.55,947.01 L541.67,948.77 L542.50,950.10" fill="none" stroke="#0000ff" stroke-width="1.35" shape-rendering="auto" stroke-dasharray="2.4 1.2"/><path d="M578.00,802.50 L576.59,803.83 L574.70,805.59 L572.44,807.67 L569.94,810.00 L567.32,812.49 L564.71,815.04 L562.23,817.57 L560.00,820.00 L557.93,822.39 L555.85,824.87 L553.80,827.40 L551.81,829.97 L549.91,832.54 L548.12,835.08 L546.47,837.58 L545.00,840.00 L543.71,842.34 L542.56,844.63 L541.56,846.88 L540.67,849.11 L539.89,851.32 L539.19,853.53 L538.57,855.75 L538.00,858.00 L537.51,860.27 L537.12,862.55 L536.82,864.84 L536.61,867.13 L536.46,869.42 L536.36,871.72 L536.31,874.01 L536.30,876.30 L536.31,878.59 L536.36,880.88 L536.46,883.18 L536.61,885.47 L536.82,887.76 L537.12,890.05 L537.51,892.33 L538.00,894.60 L538.57,896.85 L539.19,899.07 L539.89,901.28 L540.67,903.49 L541.56,905.72 L542.56,907.97 L543.71,910.26 L545.00,912.60 L546.47,915.02 L548.12,917.52 L549.91,920.06 L551.81,922.63 L553.80,925.20 L555.85,927.73 L557.93,930.21 L560.00,932.60 L562.23,935.03 L564.71,937.56 L567.32,940.11 L569.94,942.60 L572.44,944.93 L574.70,947.01 L576.59,948.77 L578.00,950.10" fill="none" stroke="#7a3c10" stroke-width="1.35" shape-rendering="auto" stroke-dasharray="2.4 1.2"/><rect x="803" y="802" width="152" height="1" fill="#000"/><rect x="803" y="950" width="152" height="1" fill="#000"/><rect x="803" y="802" width="1" height="149" fill="#000"/><rect x="954" y="802" width="1" height="149" fill="#000"/><rect x="794" y="803" width="9" height="1" fill="#000"/><rect x="799" y="804" width="4" height="1" fill="#000"/><rect x="799" y="806" width="4" height="1" fill="#000"/><rect x="799" y="808" width="4" height="1" fill="#000"/><rect x="799" y="810" width="4" height="1" fill="#000"/><rect x="799" y="812" width="4" height="1" fill="#000"/><rect x="799" y="814" width="4" height="1" fill="#000"/><rect x="799" y="815" width="4" height="1" fill="#000"/><rect x="799" y="817" width="4" height="1" fill="#000"/><rect x="799" y="819" width="4" height="1" fill="#000"/><rect x="794" y="821" width="9" height="1" fill="#000"/><rect x="799" y="823" width="4" height="1" fill="#000"/><rect x="799" y="825" width="4" height="1" fill="#000"/><rect x="799" y="826" width="4" height="1" fill="#000"/><rect x="799" y="828" width="4" height="1" fill="#000"/><rect x="799" y="830" width="4" height="1" fill="#000"/><rect x="799" y="832" width="4" height="1" fill="#000"/><rect x="799" y="834" width="4" height="1" fill="#000"/><rect x="799" y="836" width="4" height="1" fill="#000"/><rect x="799" y="837" width="4" height="1" fill="#000"/><rect x="794" y="839" width="9" height="1" fill="#000"/><rect x="799" y="841" width="4" height="1" fill="#000"/><rect x="799" y="843" width="4" height="1" fill="#000"/><rect x="799" y="845" width="4" height="1" fill="#000"/><rect x="799" y="847" width="4" height="1" fill="#000"/><rect x="799" y="848" width="4" height="1" fill="#000"/><rect x="799" y="850" width="4" height="1" fill="#000"/><rect x="799" y="852" width="4" height="1" fill="#000"/><rect x="799" y="854" width="4" height="1" fill="#000"/><rect x="799" y="856" width="4" height="1" fill="#000"/><rect x="794" y="858" width="9" height="1" fill="#000"/><rect x="799" y="859" width="4" height="1" fill="#000"/><rect x="799" y="861" width="4" height="1" fill="#000"/><rect x="799" y="863" width="4" height="1" fill="#000"/><rect x="799" y="865" width="4" height="1" fill="#000"/><rect x="799" y="867" width="4" height="1" fill="#000"/><rect x="799" y="869" width="4" height="1" fill="#000"/><rect x="799" y="870" width="4" height="1" fill="#000"/><rect x="799" y="872" width="4" height="1" fill="#000"/><rect x="799" y="874" width="4" height="1" fill="#000"/><rect x="794" y="876" width="9" height="1" fill="#000"/><rect x="799" y="878" width="4" height="1" fill="#000"/><rect x="799" y="880" width="4" height="1" fill="#000"/><rect x="799" y="882" width="4" height="1" fill="#000"/><rect x="799" y="883" width="4" height="1" fill="#000"/><rect x="799" y="885" width="4" height="1" fill="#000"/><rect x="799" y="887" width="4" height="1" fill="#000"/><rect x="799" y="889" width="4" height="1" fill="#000"/><rect x="799" y="891" width="4" height="1" fill="#000"/><rect x="799" y="893" width="4" height="1" fill="#000"/><rect x="794" y="894" width="9" height="1" fill="#000"/><rect x="799" y="896" width="4" height="1" fill="#000"/><rect x="799" y="898" width="4" height="1" fill="#000"/><rect x="799" y="900" width="4" height="1" fill="#000"/><rect x="799" y="902" width="4" height="1" fill="#000"/><rect x="799" y="904" width="4" height="1" fill="#000"/><rect x="799" y="905" width="4" height="1" fill="#000"/><rect x="799" y="907" width="4" height="1" fill="#000"/><rect x="799" y="909" width="4" height="1" fill="#000"/><rect x="799" y="911" width="4" height="1" fill="#000"/><rect x="794" y="913" width="9" height="1" fill="#000"/><rect x="799" y="915" width="4" height="1" fill="#000"/><rect x="799" y="916" width="4" height="1" fill="#000"/><rect x="799" y="918" width="4" height="1" fill="#000"/><rect x="799" y="920" width="4" height="1" fill="#000"/><rect x="799" y="922" width="4" height="1" fill="#000"/><rect x="799" y="924" width="4" height="1" fill="#000"/><rect x="799" y="926" width="4" height="1" fill="#000"/><rect x="799" y="927" width="4" height="1" fill="#000"/><rect x="799" y="929" width="4" height="1" fill="#000"/><rect x="794" y="931" width="9" height="1" fill="#000"/><rect x="799" y="933" width="4" height="1" fill="#000"/><rect x="799" y="935" width="4" height="1" fill="#000"/><rect x="799" y="937" width="4" height="1" fill="#000"/><rect x="799" y="938" width="4" height="1" fill="#000"/><rect x="799" y="940" width="4" height="1" fill="#000"/><rect x="799" y="942" width="4" height="1" fill="#000"/><rect x="799" y="944" width="4" height="1" fill="#000"/><rect x="799" y="946" width="4" height="1" fill="#000"/><rect x="799" y="948" width="4" height="1" fill="#000"/><rect x="794" y="950" width="9" height="1" fill="#000"/><rect x="804" y="951" width="1" height="9" fill="#000"/><rect x="823" y="951" width="1" height="4" fill="#000"/><rect x="842" y="951" width="1" height="9" fill="#000"/><rect x="860" y="951" width="1" height="4" fill="#000"/><rect x="879" y="951" width="1" height="9" fill="#000"/><rect x="898" y="951" width="1" height="4" fill="#000"/><rect x="916" y="951" width="1" height="9" fill="#000"/><rect x="935" y="951" width="1" height="4" fill="#000"/><rect x="954" y="951" width="1" height="9" fill="#000"/><text x="790.4" y="808" font-size="13.5" text-anchor="end" textLength="20.5" lengthAdjust="spacingAndGlyphs" xml:space="preserve">40.</text><text x="790.4" y="826.375" font-size="13.5" text-anchor="end" textLength="20.5" lengthAdjust="spacingAndGlyphs" xml:space="preserve">30.</text><text x="790.4" y="844.75" font-size="13.5" text-anchor="end" textLength="20.5" lengthAdjust="spacingAndGlyphs" xml:space="preserve">20.</text><text x="790.4" y="863.125" font-size="13.5" text-anchor="end" textLength="20.5" lengthAdjust="spacingAndGlyphs" xml:space="preserve">10.</text><text x="790.4" y="881.5" font-size="13.5" text-anchor="end" textLength="12.5" lengthAdjust="spacingAndGlyphs" xml:space="preserve">0.</text><text x="790.4" y="899.875" font-size="13.5" text-anchor="end" textLength="28.5" lengthAdjust="spacingAndGlyphs" xml:space="preserve">−10.</text><text x="790.4" y="918.25" font-size="13.5" text-anchor="end" textLength="28.5" lengthAdjust="spacingAndGlyphs" xml:space="preserve">−20.</text><text x="790.4" y="936.625" font-size="13.5" text-anchor="end" textLength="28.5" lengthAdjust="spacingAndGlyphs" xml:space="preserve">−30.</text><text x="790.4" y="955" font-size="13.5" text-anchor="end" textLength="28.5" lengthAdjust="spacingAndGlyphs" xml:space="preserve">−40.</text><text x="803.7" y="976.2" font-size="13.5" text-anchor="middle" textLength="28.7" lengthAdjust="spacingAndGlyphs" xml:space="preserve">−40.</text><text x="841.2" y="976.2" font-size="13.5" text-anchor="middle" textLength="28.7" lengthAdjust="spacingAndGlyphs" xml:space="preserve">−20.</text><text x="878.7" y="976.2" font-size="13.5" text-anchor="middle" textLength="13.4" lengthAdjust="spacingAndGlyphs" xml:space="preserve">0.</text><text x="916.2" y="976.2" font-size="13.5" text-anchor="middle" textLength="21" lengthAdjust="spacingAndGlyphs" xml:space="preserve">20.</text><text x="953.7" y="976.2" font-size="13.5" text-anchor="middle" textLength="21" lengthAdjust="spacingAndGlyphs" xml:space="preserve">40.</text><text x="879.3" y="994.6" font-size="13.5" text-anchor="middle" textLength="43" lengthAdjust="spacingAndGlyphs" xml:space="preserve">KSM−Y</text><text transform="translate(753.2,897.7) rotate(-90)" x="0" y="0" font-size="13.5" textLength="43.4" lengthAdjust="spacingAndGlyphs" xml:space="preserve">KSM−Z</text><ellipse cx="291.4" cy="877.9" rx="33.6" ry="36.9" fill="none" stroke="#000" stroke-width="1.4" shape-rendering="auto"/><path d="M321.00,875.40 L320.55,875.35 L319.94,875.29 L319.10,875.18 L318.00,875.00 L316.46,874.71 L314.56,874.34 L312.63,873.95 L311.00,873.60 L309.88,873.30 L309.06,873.02 L308.21,872.78 L307.00,872.60 L305.28,872.47 L303.25,872.38 L301.09,872.35 L299.00,872.40 L296.85,872.49 L294.61,872.62 L292.56,872.87 L291.00,873.30 L290.03,874.00 L289.48,874.91 L289.27,875.87 L289.30,876.70 L289.59,877.38 L290.17,877.98 L290.99,878.52 L292.00,879.00 L293.27,879.40 L294.79,879.74 L296.42,880.03 L298.00,880.30 L299.50,880.55 L301.00,880.77 L302.50,880.98 L304.00,881.20 L305.43,881.47 L306.81,881.76 L308.29,882.02 L310.00,882.20 L312.18,882.32 L314.69,882.40 L317.10,882.38 L319.00,882.20 L320.18,881.79 L320.90,881.21 L321.42,880.57 L322.00,880.00 L322.74,879.50 L323.49,879.01 L324.14,878.59 L324.60,878.30" fill="none" stroke="#000" stroke-width="1.4" shape-rendering="auto"/><circle cx="261.3" cy="896.3" r="2.3" fill="#ff0000" shape-rendering="auto"/><circle cx="324.3" cy="877.9" r="3.3" fill="#0000ff" shape-rendering="auto"/><path d="M320.20000000000005,873.9L329.0,882.6999999999999M320.20000000000005,882.6999999999999L329.0,873.9" stroke="#ff0000" stroke-width="1.2" fill="none" shape-rendering="auto"/><path d="M551.3,893.4 L585,877.5 L617.3,861.4" fill="none" stroke="#000" stroke-width="1.5" shape-rendering="auto"/><path d="M585.00,879.00 L584.59,878.45 L583.97,877.69 L583.49,876.64 L583.50,875.25 L584.10,873.32 L585.09,870.94 L586.42,868.46 L588.00,866.25 L589.93,864.35 L592.22,862.59 L594.64,860.98 L597.00,859.50 L599.29,858.15 L601.59,856.92 L603.86,855.86 L606.00,855.00 L608.05,854.36 L610.03,853.92 L611.87,853.65 L613.50,853.50 L614.94,853.55 L616.22,853.78 L617.26,854.06 L618.00,854.25" fill="none" stroke="#000" stroke-width="1.4" shape-rendering="auto"/><path d="M585.00,879.00 L586.48,879.11 L588.61,879.28 L590.99,879.32 L593.25,879.00 L595.29,878.23 L597.33,877.12 L599.38,875.84 L601.50,874.50 L603.77,873.11 L606.14,871.59 L608.44,870.04 L610.50,868.50 L612.30,866.93 L613.92,865.31 L615.33,863.79 L616.50,862.50 L617.40,861.59 L618.05,860.95 L618.49,860.34 L618.75,859.50 L618.76,858.22 L618.52,856.69 L618.21,855.25 L618.00,854.25" fill="none" stroke="#000" stroke-width="1.4" shape-rendering="auto"/><circle cx="555.4" cy="891.4" r="2.5" fill="#ff0000" shape-rendering="auto"/><circle cx="618" cy="855.9" r="3.2" fill="#0000ff" shape-rendering="auto"/><path d="M614.1,853.1L622.6999999999999,861.6999999999999M614.1,861.6999999999999L622.6999999999999,853.1" stroke="#ff0000" stroke-width="1.2" fill="none" shape-rendering="auto"/><ellipse cx="880.35" cy="876.9" rx="37.9" ry="16.2" fill="none" stroke="#000" stroke-width="1.4" shape-rendering="auto"/><path d="M880.00,855.00 L879.18,855.08 L877.97,855.16 L876.76,855.47 L875.90,856.25 L875.50,857.63 L875.35,859.47 L875.38,861.57 L875.50,863.75 L875.75,866.15 L876.16,868.81 L876.61,871.38 L877.00,873.50 L877.27,875.06 L877.48,876.27 L877.73,877.21 L878.10,878.00 L878.65,878.64 L879.33,879.08 L880.05,879.35 L880.75,879.50 L881.45,879.54 L882.17,879.45 L882.85,879.20 L883.40,878.75 L883.82,878.11 L884.14,877.30 L884.37,876.27 L884.50,875.00 L884.52,873.37 L884.44,871.44 L884.28,869.41 L884.10,867.50 L883.92,865.74 L883.71,864.02 L883.43,862.35 L883.00,860.75 L882.31,859.11 L881.43,857.45 L880.58,856.01 L880.00,855.00" fill="none" stroke="#000" stroke-width="1.4" shape-rendering="auto"/><path d="M878,877.5 h3 v2 h-3z" fill="none" stroke="#000" stroke-width="1.0" shape-rendering="auto"/><circle cx="898.75" cy="891.4" r="2.5" fill="#ff0000" shape-rendering="auto"/><circle cx="880" cy="855.2" r="3.2" fill="#0000ff" shape-rendering="auto"/><path d="M877.2,853.1L885.8,861.6999999999999M877.2,861.6999999999999L885.8,853.1" stroke="#ff0000" stroke-width="1.2" fill="none" shape-rendering="auto"/><path d="M804.5,808.4 L810,803.4" fill="none" stroke="#7a3c10" stroke-width="1.1" shape-rendering="auto" stroke-dasharray="2 1.3"/><path d="M947.5,803.4 L953.6,809.5" fill="none" stroke="#7a3c10" stroke-width="1.1" shape-rendering="auto" stroke-dasharray="2 1.3"/><path d="M804.5,944 L810,949.5" fill="none" stroke="#7a3c10" stroke-width="1.1" shape-rendering="auto" stroke-dasharray="2 1.3"/><path d="M947.5,949.5 L953.6,944" fill="none" stroke="#7a3c10" stroke-width="1.1" shape-rendering="auto" stroke-dasharray="2 1.3"/>
</svg></body></html>
